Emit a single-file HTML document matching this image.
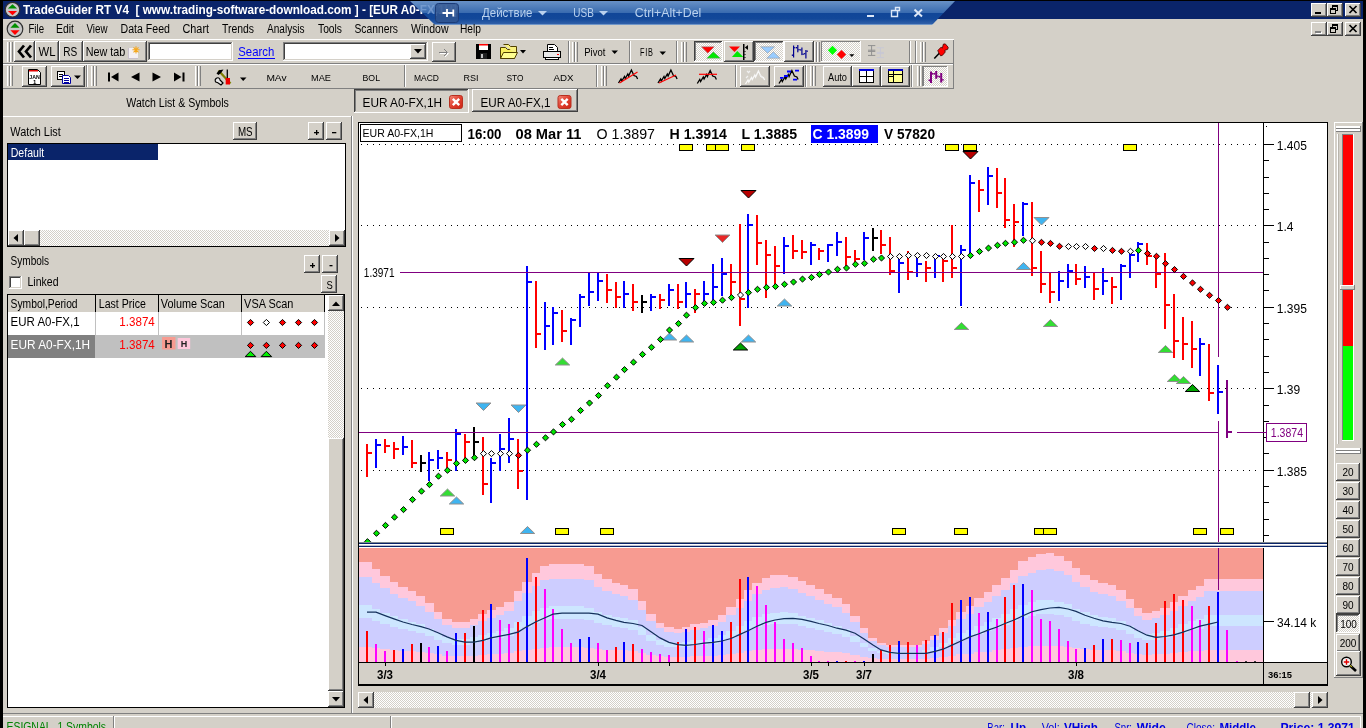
<!DOCTYPE html>
<html><head><meta charset="utf-8"><title>TradeGuider RT V4</title>
<style>html,body{margin:0;padding:0;background:#D4D0C8;overflow:hidden;font-family:"Liberation Sans",sans-serif}
svg text{font-family:"Liberation Sans",sans-serif}</style></head>
<body>
<svg width="1366" height="728" viewBox="0 0 1366 728" font-family="Liberation Sans, sans-serif" style="display:block;will-change:transform">
<defs>
<pattern id="dith" width="2" height="2" patternUnits="userSpaceOnUse"><rect width="2" height="2" fill="#FFFFFF"/><rect width="1" height="1" fill="#D4D0C8"/><rect x="1" y="1" width="1" height="1" fill="#D4D0C8"/></pattern>
<linearGradient id="ovl" x1="0" y1="0" x2="0" y2="1">
<stop offset="0" stop-color="#6C94C8"/><stop offset="0.5" stop-color="#3A6CB0"/><stop offset="0.53" stop-color="#104698"/><stop offset="0.75" stop-color="#124899"/><stop offset="0.94" stop-color="#2E5EA8"/><stop offset="0.97" stop-color="#7096C8"/><stop offset="1" stop-color="#7096C8"/>
</linearGradient>
<linearGradient id="cig" x1="0" y1="0" x2="1" y2="1"><stop offset="0" stop-color="#F48878"/><stop offset="0.5" stop-color="#E04030"/><stop offset="1" stop-color="#CC2414"/></linearGradient>
<linearGradient id="ovlfade" x1="0" y1="0" x2="1" y2="0">
<stop offset="0" stop-color="#0A246A" stop-opacity="0.55"/><stop offset="1" stop-color="#0A246A" stop-opacity="0"/>
</linearGradient>
</defs>
<rect x="0" y="0" width="1366" height="728" fill="#D4D0C8" />
<rect x="3" y="1" width="1360" height="18" fill="#0A246A" />
<circle cx="12.5" cy="9.7" r="7.3" fill="#C8C8C8" stroke="#303030" stroke-width="1.2"/>
<polygon points="12.50,4.20 7.90,8.50 17.10,8.50" fill="#009000" />
<polygon points="12.50,15.20 7.90,10.90 17.10,10.90" fill="#FF0000" />
<text x="23" y="14" font-size="12" fill="#FFF" font-weight="bold" text-anchor="start" textLength="434" lengthAdjust="spacingAndGlyphs" xml:space="preserve">TradeGuider RT V4  [ www.trading-software-download.com ] - [EUR A0-FX,1H]</text>
<polygon points="409.00,0.00 956.00,0.00 932.00,25.00 435.00,25.00" fill="url(#ovl)" />
<clipPath id="cpo"><polygon points="409,0 470,0 470,25 435,25"/></clipPath>
<text x="23" y="14" font-size="12" fill="#7FA3D6" font-weight="bold" text-anchor="start" textLength="434" lengthAdjust="spacingAndGlyphs" xml:space="preserve" clip-path="url(#cpo)" opacity="0.75">TradeGuider RT V4  [ www.trading-software-download.com ] - [EUR A0-FX,1H]</text>
<rect x="435.5" y="3.5" width="23" height="19" rx="3" ry="3" fill="#33568F" fill-opacity="0.75" stroke="#1C3C78" stroke-width="1"/>
<path d="M442.5 13 H447 M447 9 V17 M447 13 H453 M453.3 9.5 V16.5" stroke="#FFFFFF" stroke-width="1.8" fill="none"/>
<text x="482" y="17" font-size="13" fill="#B9D1EE" font-weight="normal" text-anchor="start" textLength="50.5" lengthAdjust="spacingAndGlyphs" >Действие</text>
<polygon points="538.00,11.00 547.00,11.00 542.50,15.50" fill="#B9D1EE" />
<text x="573.3" y="17" font-size="13" fill="#B9D1EE" font-weight="normal" text-anchor="start" textLength="20.5" lengthAdjust="spacingAndGlyphs" >USB</text>
<polygon points="599.00,11.00 608.00,11.00 603.50,15.50" fill="#B9D1EE" />
<text x="634.8" y="17" font-size="13" fill="#B9D1EE" font-weight="normal" text-anchor="start" textLength="66.5" lengthAdjust="spacingAndGlyphs" >Ctrl+Alt+Del</text>
<rect x="867" y="15" width="7" height="2" fill="#DDE8F8" />
<path d="M893.5 10.5 h6 v-3 h-4 v3 M891.5 10.5 h6 v6 h-6 z" stroke="#DDE8F8" stroke-width="1.4" fill="none"/>
<path d="M914.5 9.5 L922 16.5 M922 9.5 L914.5 16.5" stroke="#DDE8F8" stroke-width="2" fill="none"/>
<rect x="1311" y="3" width="16" height="14" fill="#D4D0C8" />
<rect x="1311" y="3" width="15" height="1" fill="#FFFFFF" />
<rect x="1311" y="3" width="1" height="13" fill="#FFFFFF" />
<rect x="1311" y="16" width="16" height="1" fill="#404040" />
<rect x="1326" y="3" width="1" height="14" fill="#404040" />
<rect x="1312" y="15" width="14" height="1" fill="#808080" />
<rect x="1325" y="4" width="1" height="12" fill="#808080" />
<rect x="1315" y="12" width="6" height="2" fill="#000" />
<rect x="1327" y="3" width="16" height="14" fill="#D4D0C8" />
<rect x="1327" y="3" width="15" height="1" fill="#FFFFFF" />
<rect x="1327" y="3" width="1" height="13" fill="#FFFFFF" />
<rect x="1327" y="16" width="16" height="1" fill="#404040" />
<rect x="1342" y="3" width="1" height="14" fill="#404040" />
<rect x="1328" y="15" width="14" height="1" fill="#808080" />
<rect x="1341" y="4" width="1" height="12" fill="#808080" />
<rect x="1332" y="5" width="6" height="2" fill="#000" />
<rect x="1332" y="5" width="1" height="4" fill="#000" />
<rect x="1337" y="5" width="1" height="6" fill="#000" />
<rect x="1336" y="10" width="2" height="1" fill="#000" />
<rect x="1330" y="8" width="6" height="2" fill="#000" />
<rect x="1330" y="8" width="1" height="6" fill="#000" />
<rect x="1335" y="8" width="1" height="6" fill="#000" />
<rect x="1330" y="13" width="6" height="1" fill="#000" />
<rect x="1345" y="3" width="16" height="14" fill="#D4D0C8" />
<rect x="1345" y="3" width="15" height="1" fill="#FFFFFF" />
<rect x="1345" y="3" width="1" height="13" fill="#FFFFFF" />
<rect x="1345" y="16" width="16" height="1" fill="#404040" />
<rect x="1360" y="3" width="1" height="14" fill="#404040" />
<rect x="1346" y="15" width="14" height="1" fill="#808080" />
<rect x="1359" y="4" width="1" height="12" fill="#808080" />
<path d="M1349.5 6 L1356.5 13 M1356.5 6 L1349.5 13" stroke="#000" stroke-width="1.7" fill="none"/>
<rect x="1311" y="22" width="16" height="14" fill="#D4D0C8" />
<rect x="1311" y="22" width="15" height="1" fill="#FFFFFF" />
<rect x="1311" y="22" width="1" height="13" fill="#FFFFFF" />
<rect x="1311" y="35" width="16" height="1" fill="#404040" />
<rect x="1326" y="22" width="1" height="14" fill="#404040" />
<rect x="1312" y="34" width="14" height="1" fill="#808080" />
<rect x="1325" y="23" width="1" height="12" fill="#808080" />
<rect x="1315" y="31" width="6" height="2" fill="#808080" />
<rect x="1316" y="32" width="6" height="2" fill="#FFFFFF" />
<rect x="1315" y="31" width="6" height="2" fill="#808080" />
<rect x="1327" y="22" width="16" height="14" fill="#D4D0C8" />
<rect x="1327" y="22" width="15" height="1" fill="#FFFFFF" />
<rect x="1327" y="22" width="1" height="13" fill="#FFFFFF" />
<rect x="1327" y="35" width="16" height="1" fill="#404040" />
<rect x="1342" y="22" width="1" height="14" fill="#404040" />
<rect x="1328" y="34" width="14" height="1" fill="#808080" />
<rect x="1341" y="23" width="1" height="12" fill="#808080" />
<rect x="1332" y="24" width="6" height="2" fill="#000" />
<rect x="1332" y="24" width="1" height="4" fill="#000" />
<rect x="1337" y="24" width="1" height="6" fill="#000" />
<rect x="1336" y="29" width="2" height="1" fill="#000" />
<rect x="1330" y="27" width="6" height="2" fill="#000" />
<rect x="1330" y="27" width="1" height="6" fill="#000" />
<rect x="1335" y="27" width="1" height="6" fill="#000" />
<rect x="1330" y="32" width="6" height="1" fill="#000" />
<rect x="1345" y="22" width="16" height="14" fill="#D4D0C8" />
<rect x="1345" y="22" width="15" height="1" fill="#FFFFFF" />
<rect x="1345" y="22" width="1" height="13" fill="#FFFFFF" />
<rect x="1345" y="35" width="16" height="1" fill="#404040" />
<rect x="1360" y="22" width="1" height="14" fill="#404040" />
<rect x="1346" y="34" width="14" height="1" fill="#808080" />
<rect x="1359" y="23" width="1" height="12" fill="#808080" />
<path d="M1349.5 25 L1356.5 32 M1356.5 25 L1349.5 32" stroke="#000" stroke-width="1.7" fill="none"/>
<circle cx="15" cy="29" r="7.8" fill="#C8C8C8" stroke="#303030" stroke-width="1.2"/>
<polygon points="15.00,23.00 10.40,27.80 19.60,27.80" fill="#009000" />
<polygon points="15.00,35.00 10.40,30.20 19.60,30.20" fill="#FF0000" />
<text x="28.5" y="33" font-size="12" fill="#000" font-weight="normal" text-anchor="start" textLength="15.5" lengthAdjust="spacingAndGlyphs" >File</text>
<text x="56" y="33" font-size="12" fill="#000" font-weight="normal" text-anchor="start" textLength="18" lengthAdjust="spacingAndGlyphs" >Edit</text>
<text x="86.5" y="33" font-size="12" fill="#000" font-weight="normal" text-anchor="start" textLength="21.0" lengthAdjust="spacingAndGlyphs" >View</text>
<text x="120.5" y="33" font-size="12" fill="#000" font-weight="normal" text-anchor="start" textLength="49.5" lengthAdjust="spacingAndGlyphs" >Data Feed</text>
<text x="182.5" y="33" font-size="12" fill="#000" font-weight="normal" text-anchor="start" textLength="26.5" lengthAdjust="spacingAndGlyphs" >Chart</text>
<text x="222" y="33" font-size="12" fill="#000" font-weight="normal" text-anchor="start" textLength="32" lengthAdjust="spacingAndGlyphs" >Trends</text>
<text x="267" y="33" font-size="12" fill="#000" font-weight="normal" text-anchor="start" textLength="37.5" lengthAdjust="spacingAndGlyphs" >Analysis</text>
<text x="318" y="33" font-size="12" fill="#000" font-weight="normal" text-anchor="start" textLength="24" lengthAdjust="spacingAndGlyphs" >Tools</text>
<text x="354.5" y="33" font-size="12" fill="#000" font-weight="normal" text-anchor="start" textLength="43.5" lengthAdjust="spacingAndGlyphs" >Scanners</text>
<text x="411" y="33" font-size="12" fill="#000" font-weight="normal" text-anchor="start" textLength="37.5" lengthAdjust="spacingAndGlyphs" >Window</text>
<text x="460" y="33" font-size="12" fill="#000" font-weight="normal" text-anchor="start" textLength="21" lengthAdjust="spacingAndGlyphs" >Help</text>
<rect x="3" y="39" width="951" height="1" fill="#FFFFFF" />
<rect x="3" y="63" width="951" height="1" fill="#808080" />
<rect x="3" y="64" width="951" height="1" fill="#FFFFFF" />
<rect x="3" y="88" width="951" height="1" fill="#808080" />
<rect x="953" y="40" width="1" height="49" fill="#808080" />
<rect x="7" y="42" width="1" height="20" fill="#FFFFFF" />
<rect x="8" y="42" width="1" height="20" fill="#D4D0C8" />
<rect x="9" y="42" width="1" height="20" fill="#808080" />
<rect x="10" y="42" width="1" height="20" fill="#FFFFFF" />
<rect x="11" y="42" width="1" height="20" fill="#D4D0C8" />
<rect x="12" y="42" width="1" height="20" fill="#808080" />
<rect x="14" y="41" width="21" height="21" fill="#D4D0C8" />
<rect x="14" y="41" width="20" height="1" fill="#FFFFFF" />
<rect x="14" y="41" width="1" height="20" fill="#FFFFFF" />
<rect x="14" y="61" width="21" height="1" fill="#404040" />
<rect x="34" y="41" width="1" height="21" fill="#404040" />
<rect x="15" y="60" width="19" height="1" fill="#808080" />
<rect x="33" y="42" width="1" height="19" fill="#808080" />
<rect x="35" y="41" width="24" height="21" fill="#D4D0C8" />
<rect x="35" y="41" width="23" height="1" fill="#FFFFFF" />
<rect x="35" y="41" width="1" height="20" fill="#FFFFFF" />
<rect x="35" y="61" width="24" height="1" fill="#404040" />
<rect x="58" y="41" width="1" height="21" fill="#404040" />
<rect x="36" y="60" width="22" height="1" fill="#808080" />
<rect x="57" y="42" width="1" height="19" fill="#808080" />
<rect x="59" y="41" width="24" height="21" fill="#D4D0C8" />
<rect x="59" y="41" width="23" height="1" fill="#FFFFFF" />
<rect x="59" y="41" width="1" height="20" fill="#FFFFFF" />
<rect x="59" y="61" width="24" height="1" fill="#404040" />
<rect x="82" y="41" width="1" height="21" fill="#404040" />
<rect x="60" y="60" width="22" height="1" fill="#808080" />
<rect x="81" y="42" width="1" height="19" fill="#808080" />
<rect x="83" y="41" width="64" height="21" fill="#D4D0C8" />
<rect x="83" y="41" width="63" height="1" fill="#FFFFFF" />
<rect x="83" y="41" width="1" height="20" fill="#FFFFFF" />
<rect x="83" y="61" width="64" height="1" fill="#404040" />
<rect x="146" y="41" width="1" height="21" fill="#404040" />
<rect x="84" y="60" width="62" height="1" fill="#808080" />
<rect x="145" y="42" width="1" height="19" fill="#808080" />
<path d="M24 45.5 L19 51.5 L24 57.5 M31 45.5 L26 51.5 L31 57.5" stroke="#000" stroke-width="2.7" fill="none"/>
<text x="38.5" y="56" font-size="13" fill="#000" font-weight="normal" text-anchor="start" textLength="17" lengthAdjust="spacingAndGlyphs" >WL</text>
<text x="63.2" y="56" font-size="13" fill="#000" font-weight="normal" text-anchor="start" textLength="14" lengthAdjust="spacingAndGlyphs" >RS</text>
<text x="85.7" y="56" font-size="13" fill="#000" font-weight="normal" text-anchor="start" textLength="39.5" lengthAdjust="spacingAndGlyphs" >New tab</text>
<rect x="128" y="48" width="10" height="11" fill="#F4F0F4" />
<rect x="128" y="48" width="1" height="11" fill="#C8C0CC" />
<rect x="128" y="58" width="10" height="1" fill="#C8C0CC" />
<path d="M136 46.2 V53.4 M132.4 49.8 H139.6 M133.5 47.3 L138.5 52.3 M138.5 47.3 L133.5 52.3" stroke="#F4A820" stroke-width="1.1" fill="none"/>
<rect x="148" y="42" width="85" height="19" fill="#FFFFFF" />
<rect x="148" y="42" width="84" height="1" fill="#808080" />
<rect x="148" y="42" width="1" height="18" fill="#808080" />
<rect x="149" y="43" width="82" height="1" fill="#404040" />
<rect x="149" y="43" width="1" height="16" fill="#404040" />
<rect x="148" y="60" width="85" height="1" fill="#FFFFFF" />
<rect x="232" y="42" width="1" height="19" fill="#FFFFFF" />
<rect x="149" y="59" width="83" height="1" fill="#D4D0C8" />
<rect x="231" y="43" width="1" height="17" fill="#D4D0C8" />
<text x="238.3" y="56" font-size="13" fill="#0000FF" font-weight="normal" text-anchor="start" textLength="36" lengthAdjust="spacingAndGlyphs" >Search</text>
<rect x="238" y="58" width="37" height="1" fill="#0000FF" />
<rect x="283" y="42" width="145" height="19" fill="#FFFFFF" />
<rect x="283" y="42" width="144" height="1" fill="#808080" />
<rect x="283" y="42" width="1" height="18" fill="#808080" />
<rect x="284" y="43" width="142" height="1" fill="#404040" />
<rect x="284" y="43" width="1" height="16" fill="#404040" />
<rect x="283" y="60" width="145" height="1" fill="#FFFFFF" />
<rect x="427" y="42" width="1" height="19" fill="#FFFFFF" />
<rect x="284" y="59" width="143" height="1" fill="#D4D0C8" />
<rect x="426" y="43" width="1" height="17" fill="#D4D0C8" />
<rect x="410" y="44" width="16" height="15" fill="#D4D0C8" />
<rect x="410" y="44" width="15" height="1" fill="#FFFFFF" />
<rect x="410" y="44" width="1" height="14" fill="#FFFFFF" />
<rect x="410" y="58" width="16" height="1" fill="#404040" />
<rect x="425" y="44" width="1" height="15" fill="#404040" />
<rect x="411" y="57" width="14" height="1" fill="#808080" />
<rect x="424" y="45" width="1" height="13" fill="#808080" />
<polygon points="414.00,49.00 422.00,49.00 418.00,53.50" fill="#000" />
<rect x="432" y="42" width="24" height="20" fill="#D4D0C8" />
<rect x="432" y="42" width="23" height="1" fill="#FFFFFF" />
<rect x="432" y="42" width="1" height="19" fill="#FFFFFF" />
<rect x="432" y="61" width="24" height="1" fill="#404040" />
<rect x="455" y="42" width="1" height="20" fill="#404040" />
<rect x="433" y="60" width="22" height="1" fill="#808080" />
<rect x="454" y="43" width="1" height="18" fill="#808080" />
<path d="M439 52.5 H447 M444 49 L447.5 52.5 L444 56" stroke="#FFFFFF" stroke-width="1" fill="none" transform="translate(1,1)"/>
<path d="M439 52.5 H447 M444 49 L447.5 52.5 L444 56" stroke="#808080" stroke-width="1" fill="none"/>
<rect x="476" y="44" width="15" height="15" fill="#000" />
<rect x="479" y="44" width="9" height="6" fill="#FFFFFF" />
<rect x="479" y="44" width="9" height="1.5" fill="#FF0000" />
<rect x="480" y="53" width="7" height="6" fill="#202020" />
<rect x="481" y="54" width="2" height="4" fill="#C0C0C0" />
<path d="M500.5 47.5 h5 l2 2 h7 v9 h-14 z" fill="#F8F060" stroke="#504000" stroke-width="1"/>
<path d="M503.5 44.5 h5 l2 2 h6 v8" fill="#F8F080" stroke="#504000" stroke-width="1"/>
<path d="M500.5 58.5 l3 -6 h14 l-3 6 z" fill="#FFFF90" stroke="#504000" stroke-width="1"/>
<polygon points="520.00,50.00 526.00,50.00 523.00,53.50" fill="#000" />
<path d="M547.5 51.5 v-7 h7 l3 3 v4" fill="#FFF" stroke="#000" stroke-width="1"/>
<rect x="543.5" y="51.5" width="17" height="6" fill="#E8E8E8" stroke="#000" stroke-width="1"/>
<rect x="545.5" y="57.5" width="13" height="2" fill="#FFF" stroke="#000" stroke-width="1"/>
<rect x="549" y="47" width="4" height="1" fill="#000" />
<rect x="549" y="49" width="5" height="1" fill="#000" />
<rect x="557" y="54" width="2" height="1" fill="#FF0000" />
<rect x="568" y="41" width="1" height="22" fill="#808080" />
<rect x="569" y="41" width="1" height="22" fill="#FFFFFF" />
<rect x="572" y="42" width="1" height="20" fill="#FFFFFF" />
<rect x="573" y="42" width="1" height="20" fill="#D4D0C8" />
<rect x="574" y="42" width="1" height="20" fill="#808080" />
<rect x="575" y="42" width="1" height="20" fill="#FFFFFF" />
<rect x="576" y="42" width="1" height="20" fill="#D4D0C8" />
<rect x="577" y="42" width="1" height="20" fill="#808080" />
<text x="584.3" y="55.5" font-size="10.5" fill="#000" font-weight="normal" text-anchor="start" textLength="21" lengthAdjust="spacingAndGlyphs" >Pivot</text>
<polygon points="611.50,50.50 618.00,50.50 614.70,54.00" fill="#000" />
<rect x="629" y="41" width="1" height="22" fill="#808080" />
<rect x="630" y="41" width="1" height="22" fill="#FFFFFF" />
<text x="640" y="55.5" font-size="10.5" fill="#000" font-weight="normal" text-anchor="start" textLength="13.5" lengthAdjust="spacingAndGlyphs" letter-spacing="1">FIB</text>
<polygon points="659.50,51.50 666.00,51.50 662.70,55.00" fill="#000" />
<rect x="676" y="41" width="1" height="22" fill="#808080" />
<rect x="677" y="41" width="1" height="22" fill="#FFFFFF" />
<rect x="681" y="42" width="1" height="20" fill="#FFFFFF" />
<rect x="682" y="42" width="1" height="20" fill="#D4D0C8" />
<rect x="683" y="42" width="1" height="20" fill="#808080" />
<rect x="684" y="42" width="1" height="20" fill="#FFFFFF" />
<rect x="685" y="42" width="1" height="20" fill="#D4D0C8" />
<rect x="686" y="42" width="1" height="20" fill="#808080" />
<rect x="694" y="41" width="29" height="21" fill="url(#dith)" />
<rect x="694" y="41" width="28" height="1" fill="#404040" />
<rect x="694" y="41" width="1" height="20" fill="#404040" />
<rect x="695" y="42" width="26" height="1" fill="#808080" />
<rect x="695" y="42" width="1" height="18" fill="#808080" />
<rect x="694" y="61" width="29" height="1" fill="#FFFFFF" />
<rect x="722" y="41" width="1" height="21" fill="#FFFFFF" />
<polygon points="701.40,46.80 714.30,46.80 707.80,53.20" fill="#FF0000" stroke="#909090" stroke-width="0.5" />
<polygon points="713.30,51.80 706.70,58.20 720.50,58.20" fill="#00E800" stroke="#909090" stroke-width="0.5" />
<rect x="724" y="41" width="30" height="21" fill="#D4D0C8" />
<rect x="724" y="41" width="29" height="1" fill="#FFFFFF" />
<rect x="724" y="41" width="1" height="20" fill="#FFFFFF" />
<rect x="724" y="61" width="30" height="1" fill="#404040" />
<rect x="753" y="41" width="1" height="21" fill="#404040" />
<rect x="725" y="60" width="28" height="1" fill="#808080" />
<rect x="752" y="42" width="1" height="19" fill="#808080" />
<polygon points="729.00,46.40 740.00,46.40 734.50,52.10" fill="#FF0000" />
<polygon points="737.30,50.90 731.90,56.90 743.30,56.90" fill="#00E800" />
<rect x="743" y="44" width="1.5" height="16" fill="#000" />
<polygon points="744.80,47.50 748.00,45.00 748.00,50.00" fill="#000" />
<rect x="744.5" y="51" width="1" height="1" fill="#000" />
<rect x="744.5" y="54" width="1" height="1" fill="#000" />
<rect x="744.5" y="57" width="1" height="1" fill="#000" />
<rect x="754" y="41" width="30" height="21" fill="url(#dith)" />
<rect x="754" y="41" width="29" height="1" fill="#404040" />
<rect x="754" y="41" width="1" height="20" fill="#404040" />
<rect x="755" y="42" width="27" height="1" fill="#808080" />
<rect x="755" y="42" width="1" height="18" fill="#808080" />
<rect x="754" y="61" width="30" height="1" fill="#FFFFFF" />
<rect x="783" y="41" width="1" height="21" fill="#FFFFFF" />
<polygon points="760.50,46.80 774.60,46.80 767.60,53.20" fill="#99CCFF" stroke="#909090" stroke-width="0.5" />
<polygon points="773.30,51.80 766.70,58.20 780.00,58.20" fill="#99CCFF" stroke="#909090" stroke-width="0.5" />
<rect x="784" y="41" width="30" height="21" fill="#D4D0C8" />
<rect x="784" y="41" width="29" height="1" fill="#FFFFFF" />
<rect x="784" y="41" width="1" height="20" fill="#FFFFFF" />
<rect x="784" y="61" width="30" height="1" fill="#404040" />
<rect x="813" y="41" width="1" height="21" fill="#404040" />
<rect x="785" y="60" width="28" height="1" fill="#808080" />
<rect x="812" y="42" width="1" height="19" fill="#808080" />
<rect x="793" y="45.5" width="1.2" height="12" fill="#000090" />
<rect x="791.8" y="54.5" width="1.2" height="1.4" fill="#000090" />
<rect x="794.2" y="47" width="1.2" height="1.4" fill="#000090" />
<rect x="797.2" y="45" width="1.2" height="7.3" fill="#000090" />
<rect x="796" y="47" width="1.2" height="1.4" fill="#000090" />
<rect x="798.4" y="49" width="1.3" height="1.4" fill="#000090" />
<rect x="801.3" y="47.5" width="1.2" height="7.6" fill="#000090" />
<rect x="800.1" y="49.2" width="1.2" height="1.4" fill="#000090" />
<rect x="802.5" y="53.5" width="1.3" height="1.4" fill="#000090" />
<rect x="805.3" y="50" width="1.2" height="8.5" fill="#000090" />
<rect x="804.1" y="53" width="1.2" height="1.4" fill="#000090" />
<rect x="806.5" y="50.5" width="1.3" height="1.4" fill="#000090" />
<rect x="814" y="42" width="1" height="20" fill="#FFFFFF" />
<rect x="815" y="42" width="1" height="20" fill="#D4D0C8" />
<rect x="816" y="42" width="1" height="20" fill="#808080" />
<rect x="817" y="42" width="1" height="20" fill="#FFFFFF" />
<rect x="818" y="42" width="1" height="20" fill="#D4D0C8" />
<rect x="819" y="42" width="1" height="20" fill="#808080" />
<rect x="821" y="41" width="40" height="21" fill="url(#dith)" />
<rect x="821" y="41" width="39" height="1" fill="#808080" />
<rect x="821" y="41" width="1" height="20" fill="#808080" />
<rect x="821" y="61" width="40" height="1" fill="#FFFFFF" />
<rect x="860" y="41" width="1" height="21" fill="#FFFFFF" />
<polygon points="827.90,50.30 832.50,45.70 837.10,50.30 832.50,54.90" fill="#00FF00" />
<polygon points="836.90,54.50 841.50,49.90 846.10,54.50 841.50,59.10" fill="#FF0000" />
<polygon points="849.30,54.30 854.30,54.30 851.80,57.00" fill="#000" />
<path d="M868 45.6 H875.3 M868 50.2 H875.3 M868 51.4 H875.3 M868 55.4 H875.3 M871.6 45.6 V55.4" stroke="#909090" stroke-width="1" fill="none"/>
<path d="M876.8 47.8 H884 M876.8 52.4 H884 M876.8 53.6 H884 M876.8 57.6 H884 M880.4 47.8 V57.6" stroke="#C8C8D4" stroke-width="1" fill="none"/>
<rect x="909" y="41" width="1" height="22" fill="#808080" />
<rect x="910" y="41" width="1" height="22" fill="#FFFFFF" />
<rect x="915" y="41" width="1" height="22" fill="#808080" />
<rect x="916" y="41" width="1" height="22" fill="#FFFFFF" />
<rect x="920" y="42" width="1" height="20" fill="#FFFFFF" />
<rect x="921" y="42" width="1" height="20" fill="#D4D0C8" />
<rect x="922" y="42" width="1" height="20" fill="#808080" />
<rect x="923" y="42" width="1" height="20" fill="#FFFFFF" />
<rect x="924" y="42" width="1" height="20" fill="#D4D0C8" />
<rect x="925" y="42" width="1" height="20" fill="#808080" />
<path d="M934.3 58.4 L939.5 53" stroke="#000" stroke-width="1.5"/>
<path d="M937.8 50.5 L941.2 47.1 L942.3 48.2 L943.4 44.1 L945.3 43.9 L948.2 47.3 L947.8 49.2 L944.6 50.5 L945.3 52 L942.3 55.4 L940.6 55.8 L938.7 52.8 Z" fill="#FF0000" stroke="#400000" stroke-width="0.8"/>
<rect x="7" y="66" width="1" height="20" fill="#FFFFFF" />
<rect x="8" y="66" width="1" height="20" fill="#D4D0C8" />
<rect x="9" y="66" width="1" height="20" fill="#808080" />
<rect x="10" y="66" width="1" height="20" fill="#FFFFFF" />
<rect x="11" y="66" width="1" height="20" fill="#D4D0C8" />
<rect x="12" y="66" width="1" height="20" fill="#808080" />
<rect x="22" y="66" width="25" height="21" fill="#D4D0C8" />
<rect x="22" y="66" width="24" height="1" fill="#FFFFFF" />
<rect x="22" y="66" width="1" height="20" fill="#FFFFFF" />
<rect x="22" y="86" width="25" height="1" fill="#404040" />
<rect x="46" y="66" width="1" height="21" fill="#404040" />
<rect x="23" y="85" width="23" height="1" fill="#808080" />
<rect x="45" y="67" width="1" height="19" fill="#808080" />
<rect x="51" y="66" width="34" height="21" fill="#D4D0C8" />
<rect x="51" y="66" width="33" height="1" fill="#FFFFFF" />
<rect x="51" y="66" width="1" height="20" fill="#FFFFFF" />
<rect x="51" y="86" width="34" height="1" fill="#404040" />
<rect x="84" y="66" width="1" height="21" fill="#404040" />
<rect x="52" y="85" width="32" height="1" fill="#808080" />
<rect x="83" y="67" width="1" height="19" fill="#808080" />
<rect x="86" y="65" width="1" height="22" fill="#808080" />
<rect x="87" y="65" width="1" height="22" fill="#FFFFFF" />
<path d="M28.5 69.5 h9 l3 3 v12 h-12 z" fill="#FFF" stroke="#000"/>
<rect x="29" y="70" width="9" height="1.5" fill="#E00000" />
<text x="29.3" y="78.5" font-size="6" fill="#000" font-weight="bold" text-anchor="start" textLength="10.5" lengthAdjust="spacingAndGlyphs" >JAN</text>
<text x="33" y="84" font-size="6" fill="#000" font-weight="bold" text-anchor="start" >1</text>
<rect x="57.5" y="71.5" width="7" height="8" fill="#FFF" stroke="#000"/>
<rect x="59" y="74" width="4" height="1" fill="#000" />
<rect x="59" y="76" width="4" height="1" fill="#000" />
<path d="M62.5 75.5 h6 l2 2 v6 h-8 z" fill="#FFF" stroke="#0000A0"/>
<rect x="64" y="78" width="5" height="1" fill="#0000A0" />
<rect x="64" y="80" width="5" height="1" fill="#0000A0" />
<rect x="64" y="82" width="5" height="1" fill="#0000A0" />
<polygon points="74.00,75.50 81.00,75.50 77.50,79.00" fill="#000" />
<rect x="91" y="66" width="1" height="20" fill="#FFFFFF" />
<rect x="92" y="66" width="1" height="20" fill="#D4D0C8" />
<rect x="93" y="66" width="1" height="20" fill="#808080" />
<rect x="94" y="66" width="1" height="20" fill="#FFFFFF" />
<rect x="95" y="66" width="1" height="20" fill="#D4D0C8" />
<rect x="96" y="66" width="1" height="20" fill="#808080" />
<rect x="108" y="72.5" width="2" height="9" fill="#000" />
<polygon points="118.50,72.50 118.50,81.50 111.00,77.00" fill="#000" />
<polygon points="139.50,72.50 139.50,81.50 131.00,77.00" fill="#000" />
<polygon points="152.50,72.50 152.50,81.50 161.00,77.00" fill="#000" />
<polygon points="174.00,72.50 174.00,81.50 181.50,77.00" fill="#000" />
<rect x="182.5" y="72.5" width="2" height="9" fill="#000" />
<rect x="195" y="66" width="1" height="20" fill="#FFFFFF" />
<rect x="196" y="66" width="1" height="20" fill="#D4D0C8" />
<rect x="197" y="66" width="1" height="20" fill="#808080" />
<rect x="198" y="66" width="1" height="20" fill="#FFFFFF" />
<rect x="199" y="66" width="1" height="20" fill="#D4D0C8" />
<rect x="200" y="66" width="1" height="20" fill="#808080" />
<path d="M218.5 70.5 L230.5 83.5" stroke="#808000" stroke-width="2.2"/>
<path d="M216.5 73.5 L219 70.2 L223.5 69.6 L221 73 L218.5 75 Z" fill="#000"/>
<path d="M227.3 69.5 V78" stroke="#000" stroke-width="1.3"/>
<rect x="225.7" y="78" width="4.3" height="6.5" fill="#F00000" />
<path d="M216 78.5 c-1.5 1.5 -1 4 1.5 4 l3.5 2.5 l2 -2 l-3 -3 c0 -2 -2 -3 -4 -1.5" stroke="#000" stroke-width="1.2" fill="#E8E8E8"/>
<polygon points="240.00,77.50 246.50,77.50 243.20,81.00" fill="#000" />
<text x="266.4" y="80.5" font-size="9.5" fill="#000" font-weight="normal" text-anchor="start" textLength="20.2" lengthAdjust="spacingAndGlyphs" >MAv</text>
<text x="311" y="80.5" font-size="9.5" fill="#000" font-weight="normal" text-anchor="start" textLength="20" lengthAdjust="spacingAndGlyphs" >MAE</text>
<text x="362.5" y="80.5" font-size="9.5" fill="#000" font-weight="normal" text-anchor="start" textLength="17.5" lengthAdjust="spacingAndGlyphs" >BOL</text>
<text x="414" y="80.5" font-size="9.5" fill="#000" font-weight="normal" text-anchor="start" textLength="25" lengthAdjust="spacingAndGlyphs" >MACD</text>
<text x="463.5" y="80.5" font-size="9.5" fill="#000" font-weight="normal" text-anchor="start" textLength="15.0" lengthAdjust="spacingAndGlyphs" >RSI</text>
<text x="506.5" y="80.5" font-size="9.5" fill="#000" font-weight="normal" text-anchor="start" textLength="17.0" lengthAdjust="spacingAndGlyphs" >STO</text>
<text x="553.5" y="80.5" font-size="9.5" fill="#000" font-weight="normal" text-anchor="start" textLength="20.0" lengthAdjust="spacingAndGlyphs" >ADX</text>
<rect x="404" y="65" width="1" height="22" fill="#808080" />
<rect x="405" y="65" width="1" height="22" fill="#FFFFFF" />
<rect x="596" y="65" width="1" height="22" fill="#808080" />
<rect x="597" y="65" width="1" height="22" fill="#FFFFFF" />
<rect x="601" y="66" width="1" height="20" fill="#FFFFFF" />
<rect x="602" y="66" width="1" height="20" fill="#D4D0C8" />
<rect x="603" y="66" width="1" height="20" fill="#808080" />
<rect x="604" y="66" width="1" height="20" fill="#FFFFFF" />
<rect x="605" y="66" width="1" height="20" fill="#D4D0C8" />
<rect x="606" y="66" width="1" height="20" fill="#808080" />
<path d="M618.5 83.0 l2.5 -4 l0.8 2 l2.7 -4.5 l0.8 2 l2.5 -4.5 l0.8 2 l2.8 -6 l2.5 5.5 l2.5 1 l1.2 2.5" stroke="#000" stroke-width="1.3" fill="none"/>
<path d="M619.5 83 L637.5 72" stroke="#FF0000" stroke-width="1.2"/>
<path d="M658 83.0 l2.5 -4 l0.8 2 l2.7 -4.5 l0.8 2 l2.5 -4.5 l0.8 2 l2.8 -6 l2.5 5.5 l2.5 1 l1.2 2.5" stroke="#000" stroke-width="1.3" fill="none"/>
<path d="M659 83 L676 75" stroke="#FF0000" stroke-width="1.2" fill="none"/>
<path d="M697.3 83.5 l2.5 -4 l0.8 2 l2.7 -4.5 l0.8 2 l2.5 -4.5 l0.8 2 l2.8 -6 l2.5 5.5 l2.5 1 l1.2 2.5" stroke="#000" stroke-width="1.3" fill="none"/>
<path d="M699 74.3 H717" stroke="#FF0000" stroke-width="1.2"/>
<rect x="735" y="65" width="1" height="22" fill="#808080" />
<rect x="736" y="65" width="1" height="22" fill="#FFFFFF" />
<rect x="740" y="66" width="30" height="21" fill="#D4D0C8" />
<rect x="740" y="66" width="29" height="1" fill="#FFFFFF" />
<rect x="740" y="66" width="1" height="20" fill="#FFFFFF" />
<rect x="740" y="86" width="30" height="1" fill="#404040" />
<rect x="769" y="66" width="1" height="21" fill="#404040" />
<rect x="741" y="85" width="28" height="1" fill="#808080" />
<rect x="768" y="67" width="1" height="19" fill="#808080" />
<path d="M745.5 84.0 l2.5 -4 l0.8 2 l2.7 -4.5 l0.8 2 l2.5 -4.5 l0.8 2 l2.8 -6 l2.5 5.5 l2.5 1 l1.2 2.5" stroke="#F8F8F8" stroke-width="1.3" fill="none"/>
<path d="M747 71 l2 2 M750 71 l-2 2 M746 78 l2 -2 M760 75 l3 3" stroke="#F0F0F0" stroke-width="1.2"/>
<rect x="774" y="66" width="30" height="21" fill="#D4D0C8" />
<rect x="774" y="66" width="29" height="1" fill="#FFFFFF" />
<rect x="774" y="66" width="1" height="20" fill="#FFFFFF" />
<rect x="774" y="86" width="30" height="1" fill="#404040" />
<rect x="803" y="66" width="1" height="21" fill="#404040" />
<rect x="775" y="85" width="28" height="1" fill="#808080" />
<rect x="802" y="67" width="1" height="19" fill="#808080" />
<path d="M779 83.5 l2.5 -4 l0.8 2 l2.7 -4.5 l0.8 2 l2.5 -4.5 l0.8 2 l2.8 -6 l2.5 5.5 l2.5 1 l1.2 2.5" stroke="#000" stroke-width="1.3" fill="none"/>
<path d="M780 77.8 h3.5 M784 76 h4 M787 71.5 h4 M795 70.7 h4 M793 79.7 h4" stroke="#0000FF" stroke-width="1.8"/>
<rect x="805" y="65" width="1" height="22" fill="#808080" />
<rect x="806" y="65" width="1" height="22" fill="#FFFFFF" />
<rect x="810" y="66" width="1" height="20" fill="#FFFFFF" />
<rect x="811" y="66" width="1" height="20" fill="#D4D0C8" />
<rect x="812" y="66" width="1" height="20" fill="#808080" />
<rect x="813" y="66" width="1" height="20" fill="#FFFFFF" />
<rect x="814" y="66" width="1" height="20" fill="#D4D0C8" />
<rect x="815" y="66" width="1" height="20" fill="#808080" />
<rect x="823" y="66" width="29" height="21" fill="#D4D0C8" />
<rect x="823" y="66" width="28" height="1" fill="#FFFFFF" />
<rect x="823" y="66" width="1" height="20" fill="#FFFFFF" />
<rect x="823" y="86" width="29" height="1" fill="#404040" />
<rect x="851" y="66" width="1" height="21" fill="#404040" />
<rect x="824" y="85" width="27" height="1" fill="#808080" />
<rect x="850" y="67" width="1" height="19" fill="#808080" />
<text x="828" y="81" font-size="10.5" fill="#000" font-weight="normal" text-anchor="start" textLength="19" lengthAdjust="spacingAndGlyphs" >Auto</text>
<rect x="852" y="66" width="29" height="21" fill="#D4D0C8" />
<rect x="852" y="66" width="28" height="1" fill="#FFFFFF" />
<rect x="852" y="66" width="1" height="20" fill="#FFFFFF" />
<rect x="852" y="86" width="29" height="1" fill="#404040" />
<rect x="880" y="66" width="1" height="21" fill="#404040" />
<rect x="853" y="85" width="27" height="1" fill="#808080" />
<rect x="879" y="67" width="1" height="19" fill="#808080" />
<rect x="859.5" y="69.5" width="14" height="13" fill="#FFF" stroke="#000"/>
<rect x="859" y="69" width="15" height="2" fill="#0000E0" />
<rect x="866" y="71" width="1" height="12" fill="#000" />
<rect x="860" y="76" width="14" height="1" fill="#000" />
<rect x="881" y="66" width="29" height="21" fill="#D4D0C8" />
<rect x="881" y="66" width="28" height="1" fill="#FFFFFF" />
<rect x="881" y="66" width="1" height="20" fill="#FFFFFF" />
<rect x="881" y="86" width="29" height="1" fill="#404040" />
<rect x="909" y="66" width="1" height="21" fill="#404040" />
<rect x="882" y="85" width="27" height="1" fill="#808080" />
<rect x="908" y="67" width="1" height="19" fill="#808080" />
<rect x="888.5" y="69.5" width="14" height="13" fill="#FFFF90" stroke="#000"/>
<rect x="888" y="69" width="15" height="2" fill="#0000C0" />
<rect x="893" y="71" width="1" height="12" fill="#000" />
<rect x="889" y="76" width="5" height="1" fill="#000" />
<rect x="889" y="74" width="14" height="1" fill="#000" />
<rect x="911" y="65" width="1" height="22" fill="#808080" />
<rect x="912" y="65" width="1" height="22" fill="#FFFFFF" />
<rect x="917" y="66" width="1" height="20" fill="#FFFFFF" />
<rect x="918" y="66" width="1" height="20" fill="#D4D0C8" />
<rect x="919" y="66" width="1" height="20" fill="#808080" />
<rect x="920" y="66" width="1" height="20" fill="#FFFFFF" />
<rect x="921" y="66" width="1" height="20" fill="#D4D0C8" />
<rect x="922" y="66" width="1" height="20" fill="#808080" />
<rect x="923" y="66" width="25" height="21" fill="url(#dith)" />
<rect x="923" y="66" width="24" height="1" fill="#808080" />
<rect x="923" y="66" width="1" height="20" fill="#808080" />
<rect x="923" y="86" width="25" height="1" fill="#FFFFFF" />
<rect x="947" y="66" width="1" height="21" fill="#FFFFFF" />
<rect x="930" y="71.5" width="2" height="11.5" fill="#800080" />
<rect x="928.5" y="79.5" width="1.5" height="1.6" fill="#800080" />
<rect x="932" y="73" width="1.5" height="1.6" fill="#800080" />
<rect x="935.2" y="71" width="2" height="7.8" fill="#800080" />
<rect x="933.7" y="73" width="1.5" height="1.6" fill="#800080" />
<rect x="937.2" y="75.5" width="1.5" height="1.6" fill="#800080" />
<rect x="940.2" y="73" width="2" height="9.5" fill="#800080" />
<rect x="938.7" y="76" width="1.5" height="1.6" fill="#800080" />
<rect x="942.2" y="79" width="1.5" height="1.6" fill="#800080" />
<text x="126.3" y="107" font-size="12" fill="#000" font-weight="normal" text-anchor="start" textLength="102.5" lengthAdjust="spacingAndGlyphs" >Watch List &amp; Symbols</text>
<rect x="354" y="89" width="115" height="24" fill="#D4D0C8" />
<rect x="354" y="89" width="114" height="1" fill="#404040" />
<rect x="354" y="89" width="1" height="23" fill="#404040" />
<rect x="355" y="90" width="112" height="1" fill="#808080" />
<rect x="355" y="90" width="1" height="21" fill="#808080" />
<rect x="354" y="112" width="115" height="1" fill="#FFFFFF" />
<rect x="468" y="89" width="1" height="24" fill="#FFFFFF" />
<text x="362.5" y="106.5" font-size="13" fill="#000" font-weight="normal" text-anchor="start" textLength="79.5" lengthAdjust="spacingAndGlyphs" >EUR A0-FX,1H</text>
<rect x="449.5" y="95.5" width="13" height="13" rx="2.2" ry="2.2" fill="url(#cig)" stroke="#B83020" stroke-width="1"/>
<path d="M452.8 98.8 L459.2 105.2 M459.2 98.8 L452.8 105.2" stroke="#FFF" stroke-width="2.4" fill="none"/>
<rect x="472" y="89" width="106" height="23" fill="#D4D0C8" />
<rect x="472" y="89" width="105" height="1" fill="#FFFFFF" />
<rect x="472" y="89" width="1" height="22" fill="#FFFFFF" />
<rect x="472" y="111" width="106" height="1" fill="#404040" />
<rect x="577" y="89" width="1" height="23" fill="#404040" />
<rect x="473" y="110" width="104" height="1" fill="#808080" />
<rect x="576" y="90" width="1" height="21" fill="#808080" />
<text x="480.5" y="106.5" font-size="13" fill="#000" font-weight="normal" text-anchor="start" textLength="70" lengthAdjust="spacingAndGlyphs" >EUR A0-FX,1</text>
<rect x="558" y="95.5" width="13" height="13" rx="2.2" ry="2.2" fill="url(#cig)" stroke="#B83020" stroke-width="1"/>
<path d="M561.3 98.8 L567.7 105.2 M567.7 98.8 L561.3 105.2" stroke="#FFF" stroke-width="2.4" fill="none"/>
<rect x="3" y="116" width="348" height="1" fill="#FFFFFF" />
<rect x="351" y="116" width="1" height="598" fill="#808080" />
<rect x="352" y="116" width="1" height="598" fill="#FFFFFF" />
<text x="10.3" y="136" font-size="12" fill="#000" font-weight="normal" text-anchor="start" textLength="50.5" lengthAdjust="spacingAndGlyphs" >Watch List</text>
<rect x="233" y="122" width="24" height="18" fill="#D4D0C8" />
<rect x="233" y="122" width="23" height="1" fill="#FFFFFF" />
<rect x="233" y="122" width="1" height="17" fill="#FFFFFF" />
<rect x="233" y="139" width="24" height="1" fill="#404040" />
<rect x="256" y="122" width="1" height="18" fill="#404040" />
<rect x="234" y="138" width="22" height="1" fill="#808080" />
<rect x="255" y="123" width="1" height="16" fill="#808080" />
<text x="237.9" y="136" font-size="12" fill="#000" font-weight="normal" text-anchor="start" textLength="14.7" lengthAdjust="spacingAndGlyphs" >MS</text>
<rect x="308" y="122" width="16" height="18" fill="#D4D0C8" />
<rect x="308" y="122" width="15" height="1" fill="#FFFFFF" />
<rect x="308" y="122" width="1" height="17" fill="#FFFFFF" />
<rect x="308" y="139" width="16" height="1" fill="#404040" />
<rect x="323" y="122" width="1" height="18" fill="#404040" />
<rect x="309" y="138" width="14" height="1" fill="#808080" />
<rect x="322" y="123" width="1" height="16" fill="#808080" />
<rect x="314" y="132" width="5" height="1.3" fill="#000" />
<rect x="316" y="130" width="1.3" height="5" fill="#000" />
<rect x="326" y="122" width="16" height="18" fill="#D4D0C8" />
<rect x="326" y="122" width="15" height="1" fill="#FFFFFF" />
<rect x="326" y="122" width="1" height="17" fill="#FFFFFF" />
<rect x="326" y="139" width="16" height="1" fill="#404040" />
<rect x="341" y="122" width="1" height="18" fill="#404040" />
<rect x="327" y="138" width="14" height="1" fill="#808080" />
<rect x="340" y="123" width="1" height="16" fill="#808080" />
<rect x="332" y="132" width="4.3" height="1.3" fill="#000" />
<rect x="7" y="143" width="339" height="104" fill="#000" />
<rect x="8" y="144" width="337" height="102" fill="#FFFFFF" />
<rect x="8" y="144" width="150" height="16" fill="#0A246A" />
<text x="10.7" y="157" font-size="12" fill="#FFF" font-weight="normal" text-anchor="start" textLength="33.5" lengthAdjust="spacingAndGlyphs" >Default</text>
<rect x="8" y="230" width="337" height="16" fill="url(#dith)" />
<rect x="8" y="230" width="16" height="16" fill="#D4D0C8" />
<rect x="8" y="230" width="15" height="1" fill="#FFFFFF" />
<rect x="8" y="230" width="1" height="15" fill="#FFFFFF" />
<rect x="8" y="245" width="16" height="1" fill="#404040" />
<rect x="23" y="230" width="1" height="16" fill="#404040" />
<rect x="9" y="244" width="14" height="1" fill="#808080" />
<rect x="22" y="231" width="1" height="14" fill="#808080" />
<polygon points="18.00,234.00 18.00,242.00 13.50,238.00" fill="#000" />
<rect x="24" y="230" width="16" height="16" fill="#D4D0C8" />
<rect x="24" y="230" width="15" height="1" fill="#FFFFFF" />
<rect x="24" y="230" width="1" height="15" fill="#FFFFFF" />
<rect x="24" y="245" width="16" height="1" fill="#404040" />
<rect x="39" y="230" width="1" height="16" fill="#404040" />
<rect x="25" y="244" width="14" height="1" fill="#808080" />
<rect x="38" y="231" width="1" height="14" fill="#808080" />
<rect x="329" y="230" width="16" height="16" fill="#D4D0C8" />
<rect x="329" y="230" width="15" height="1" fill="#FFFFFF" />
<rect x="329" y="230" width="1" height="15" fill="#FFFFFF" />
<rect x="329" y="245" width="16" height="1" fill="#404040" />
<rect x="344" y="230" width="1" height="16" fill="#404040" />
<rect x="330" y="244" width="14" height="1" fill="#808080" />
<rect x="343" y="231" width="1" height="14" fill="#808080" />
<polygon points="335.00,234.00 335.00,242.00 339.50,238.00" fill="#000" />
<text x="10.6" y="264.5" font-size="12" fill="#000" font-weight="normal" text-anchor="start" textLength="38.5" lengthAdjust="spacingAndGlyphs" >Symbols</text>
<rect x="304" y="255" width="16" height="18" fill="#D4D0C8" />
<rect x="304" y="255" width="15" height="1" fill="#FFFFFF" />
<rect x="304" y="255" width="1" height="17" fill="#FFFFFF" />
<rect x="304" y="272" width="16" height="1" fill="#404040" />
<rect x="319" y="255" width="1" height="18" fill="#404040" />
<rect x="305" y="271" width="14" height="1" fill="#808080" />
<rect x="318" y="256" width="1" height="16" fill="#808080" />
<rect x="310" y="265" width="5" height="1.3" fill="#000" />
<rect x="312" y="263" width="1.3" height="5" fill="#000" />
<rect x="322" y="255" width="16" height="18" fill="#D4D0C8" />
<rect x="322" y="255" width="15" height="1" fill="#FFFFFF" />
<rect x="322" y="255" width="1" height="17" fill="#FFFFFF" />
<rect x="322" y="272" width="16" height="1" fill="#404040" />
<rect x="337" y="255" width="1" height="18" fill="#404040" />
<rect x="323" y="271" width="14" height="1" fill="#808080" />
<rect x="336" y="256" width="1" height="16" fill="#808080" />
<rect x="329.5" y="265" width="3" height="1.3" fill="#000" />
<rect x="9" y="276" width="13" height="13" fill="#FFFFFF" />
<rect x="9" y="276" width="12" height="1" fill="#808080" />
<rect x="9" y="276" width="1" height="12" fill="#808080" />
<rect x="10" y="277" width="10" height="1" fill="#404040" />
<rect x="10" y="277" width="1" height="10" fill="#404040" />
<rect x="9" y="288" width="13" height="1" fill="#FFFFFF" />
<rect x="21" y="276" width="1" height="13" fill="#FFFFFF" />
<rect x="10" y="287" width="11" height="1" fill="#D4D0C8" />
<rect x="20" y="277" width="1" height="11" fill="#D4D0C8" />
<text x="27.5" y="286" font-size="12" fill="#000" font-weight="normal" text-anchor="start" textLength="31" lengthAdjust="spacingAndGlyphs" >Linked</text>
<rect x="321" y="275" width="16" height="18" fill="#D4D0C8" />
<rect x="321" y="275" width="15" height="1" fill="#FFFFFF" />
<rect x="321" y="275" width="1" height="17" fill="#FFFFFF" />
<rect x="321" y="292" width="16" height="1" fill="#404040" />
<rect x="336" y="275" width="1" height="18" fill="#404040" />
<rect x="322" y="291" width="14" height="1" fill="#808080" />
<rect x="335" y="276" width="1" height="16" fill="#808080" />
<text x="326.4" y="288.7" font-size="11.5" fill="#000" font-weight="normal" text-anchor="start" textLength="6.3" lengthAdjust="spacingAndGlyphs" >S</text>
<rect x="7" y="294" width="338" height="414" fill="#000" />
<rect x="8" y="295" width="320" height="412" fill="#FFFFFF" />
<rect x="8" y="295" width="316" height="17" fill="#D4D0C8" />
<rect x="95" y="295" width="1" height="17" fill="#000" />
<rect x="158" y="295" width="1" height="17" fill="#000" />
<rect x="241" y="295" width="1" height="17" fill="#000" />
<rect x="324" y="295" width="1" height="17" fill="#000" />
<text x="10.6" y="308" font-size="12" fill="#000" font-weight="normal" text-anchor="start" textLength="67" lengthAdjust="spacingAndGlyphs" >Symbol,Period</text>
<text x="98.8" y="308" font-size="12" fill="#000" font-weight="normal" text-anchor="start" textLength="47" lengthAdjust="spacingAndGlyphs" >Last Price</text>
<text x="160.8" y="308" font-size="12" fill="#000" font-weight="normal" text-anchor="start" textLength="64" lengthAdjust="spacingAndGlyphs" >Volume Scan</text>
<text x="244.1" y="307.7" font-size="12" fill="#000" font-weight="normal" text-anchor="start" textLength="49.2" lengthAdjust="spacingAndGlyphs" >VSA Scan</text>
<rect x="95" y="312" width="1" height="46" fill="#C0C0C0" />
<rect x="158" y="312" width="1" height="46" fill="#C0C0C0" />
<rect x="241" y="312" width="1" height="46" fill="#C0C0C0" />
<rect x="324" y="312" width="1" height="46" fill="#C0C0C0" />
<text x="10.6" y="326" font-size="13" fill="#000" font-weight="normal" text-anchor="start" textLength="69" lengthAdjust="spacingAndGlyphs" >EUR A0-FX,1</text>
<text x="154.8" y="326" font-size="13" fill="#FF0000" font-weight="normal" text-anchor="end" textLength="35.5" lengthAdjust="spacingAndGlyphs" >1.3874</text>
<rect x="8" y="335" width="87" height="23" fill="#808080" />
<rect x="95" y="335" width="229" height="23" fill="#C0C0C0" />
<text x="10.6" y="349" font-size="13" fill="#FFF" font-weight="normal" text-anchor="start" textLength="79.5" lengthAdjust="spacingAndGlyphs" >EUR A0-FX,1H</text>
<text x="154.8" y="349" font-size="13" fill="#FF0000" font-weight="normal" text-anchor="end" textLength="35.5" lengthAdjust="spacingAndGlyphs" >1.3874</text>
<rect x="162" y="337" width="13.5" height="12.5" fill="#F79B91" />
<text x="164.5" y="347.5" font-size="11" fill="#202020" font-weight="bold" text-anchor="start" >H</text>
<rect x="177.7" y="338" width="12.5" height="11" fill="#FFC8DC" />
<text x="180.8" y="347" font-size="9" fill="#202020" font-weight="bold" text-anchor="start" >H</text>
<polygon points="247.40,322.50 250.50,319.40 253.60,322.50 250.50,325.60" fill="#FF0000" stroke="#000" stroke-width="1" />
<polygon points="247.40,345.40 250.50,342.30 253.60,345.40 250.50,348.50" fill="#FF0000" stroke="#000" stroke-width="1" />
<polygon points="263.30,322.50 266.40,319.40 269.50,322.50 266.40,325.60" fill="#FFFFFF" stroke="#000" stroke-width="1" />
<polygon points="263.30,345.40 266.40,342.30 269.50,345.40 266.40,348.50" fill="#FF0000" stroke="#000" stroke-width="1" />
<polygon points="279.40,322.50 282.50,319.40 285.60,322.50 282.50,325.60" fill="#FF0000" stroke="#000" stroke-width="1" />
<polygon points="279.40,345.40 282.50,342.30 285.60,345.40 282.50,348.50" fill="#FF0000" stroke="#000" stroke-width="1" />
<polygon points="295.40,322.50 298.50,319.40 301.60,322.50 298.50,325.60" fill="#FF0000" stroke="#000" stroke-width="1" />
<polygon points="295.40,345.40 298.50,342.30 301.60,345.40 298.50,348.50" fill="#FF0000" stroke="#000" stroke-width="1" />
<polygon points="311.40,322.50 314.50,319.40 317.60,322.50 314.50,325.60" fill="#FF0000" stroke="#000" stroke-width="1" />
<polygon points="311.40,345.40 314.50,342.30 317.60,345.40 314.50,348.50" fill="#FF0000" stroke="#000" stroke-width="1" />
<polygon points="250.50,351.30 245.20,356.60 255.80,356.60" fill="#00F000" stroke="#000" stroke-width="1" />
<polygon points="266.40,351.30 261.10,356.60 271.70,356.60" fill="#00F000" stroke="#000" stroke-width="1" />
<rect x="328" y="295" width="16" height="412" fill="url(#dith)" />
<rect x="328" y="295" width="16" height="16" fill="#D4D0C8" />
<rect x="328" y="295" width="15" height="1" fill="#FFFFFF" />
<rect x="328" y="295" width="1" height="15" fill="#FFFFFF" />
<rect x="328" y="310" width="16" height="1" fill="#404040" />
<rect x="343" y="295" width="1" height="16" fill="#404040" />
<rect x="329" y="309" width="14" height="1" fill="#808080" />
<rect x="342" y="296" width="1" height="14" fill="#808080" />
<polygon points="332.00,306.00 340.00,306.00 336.00,301.50" fill="#000" />
<rect x="328" y="438" width="16" height="253" fill="#D4D0C8" />
<rect x="328" y="438" width="15" height="1" fill="#FFFFFF" />
<rect x="328" y="438" width="1" height="252" fill="#FFFFFF" />
<rect x="328" y="690" width="16" height="1" fill="#404040" />
<rect x="343" y="438" width="1" height="253" fill="#404040" />
<rect x="329" y="689" width="14" height="1" fill="#808080" />
<rect x="342" y="439" width="1" height="251" fill="#808080" />
<rect x="328" y="691" width="16" height="16" fill="#D4D0C8" />
<rect x="328" y="691" width="15" height="1" fill="#FFFFFF" />
<rect x="328" y="691" width="1" height="15" fill="#FFFFFF" />
<rect x="328" y="706" width="16" height="1" fill="#404040" />
<rect x="343" y="691" width="1" height="16" fill="#404040" />
<rect x="329" y="705" width="14" height="1" fill="#808080" />
<rect x="342" y="692" width="1" height="14" fill="#808080" />
<polygon points="332.00,697.00 340.00,697.00 336.00,701.50" fill="#000" />
<rect x="358" y="122" width="970" height="564" fill="#000" />
<rect x="359" y="123" width="968" height="539" fill="#FFFFFF" />
<rect x="359" y="663" width="968" height="21" fill="#D4D0C8" />
<g shape-rendering="crispEdges">
<rect x="359" y="548" width="904" height="114" fill="#F79B91" />
<rect x="359" y="562" width="13" height="100" fill="#FFC8DC" />
<rect x="359" y="577" width="13" height="85" fill="#CDCDFF" />
<rect x="359" y="605" width="13" height="57" fill="#CDE6FF" />
<rect x="359" y="618" width="13" height="44" fill="#CDCDFF" />
<rect x="359" y="647" width="13" height="15" fill="#FFC8DC" />
<rect x="372" y="569" width="8" height="93" fill="#FFC8DC" />
<rect x="372" y="583" width="8" height="79" fill="#CDCDFF" />
<rect x="372" y="609" width="8" height="53" fill="#CDE6FF" />
<rect x="372" y="621" width="8" height="41" fill="#CDCDFF" />
<rect x="372" y="648" width="8" height="14" fill="#FFC8DC" />
<rect x="380" y="576" width="10" height="86" fill="#FFC8DC" />
<rect x="380" y="588" width="10" height="74" fill="#CDCDFF" />
<rect x="380" y="613" width="10" height="49" fill="#CDE6FF" />
<rect x="380" y="624" width="10" height="38" fill="#CDCDFF" />
<rect x="380" y="649" width="10" height="13" fill="#FFC8DC" />
<rect x="390" y="582" width="8" height="80" fill="#FFC8DC" />
<rect x="390" y="594" width="8" height="68" fill="#CDCDFF" />
<rect x="390" y="616" width="8" height="46" fill="#CDE6FF" />
<rect x="390" y="627" width="8" height="35" fill="#CDCDFF" />
<rect x="390" y="650" width="8" height="12" fill="#FFC8DC" />
<rect x="398" y="587" width="10" height="75" fill="#FFC8DC" />
<rect x="398" y="598" width="10" height="64" fill="#CDCDFF" />
<rect x="398" y="619" width="10" height="43" fill="#CDE6FF" />
<rect x="398" y="629" width="10" height="33" fill="#CDCDFF" />
<rect x="398" y="651" width="10" height="11" fill="#FFC8DC" />
<rect x="408" y="591" width="8" height="71" fill="#FFC8DC" />
<rect x="408" y="601" width="8" height="61" fill="#CDCDFF" />
<rect x="408" y="622" width="8" height="40" fill="#CDE6FF" />
<rect x="408" y="631" width="8" height="31" fill="#CDCDFF" />
<rect x="408" y="651" width="8" height="11" fill="#FFC8DC" />
<rect x="416" y="596" width="9" height="66" fill="#FFC8DC" />
<rect x="416" y="606" width="9" height="56" fill="#CDCDFF" />
<rect x="416" y="624" width="9" height="38" fill="#CDE6FF" />
<rect x="416" y="633" width="9" height="29" fill="#CDCDFF" />
<rect x="416" y="652" width="9" height="10" fill="#FFC8DC" />
<rect x="425" y="603" width="9" height="59" fill="#FFC8DC" />
<rect x="425" y="612" width="9" height="50" fill="#CDCDFF" />
<rect x="425" y="629" width="9" height="33" fill="#CDE6FF" />
<rect x="425" y="636" width="9" height="26" fill="#CDCDFF" />
<rect x="425" y="653" width="9" height="9" fill="#FFC8DC" />
<rect x="434" y="612" width="8" height="50" fill="#FFC8DC" />
<rect x="434" y="619" width="8" height="43" fill="#CDCDFF" />
<rect x="434" y="633" width="8" height="29" fill="#CDE6FF" />
<rect x="434" y="640" width="8" height="22" fill="#CDCDFF" />
<rect x="434" y="654" width="8" height="8" fill="#FFC8DC" />
<rect x="442" y="619" width="10" height="43" fill="#FFC8DC" />
<rect x="442" y="625" width="10" height="37" fill="#CDCDFF" />
<rect x="442" y="637" width="10" height="25" fill="#CDE6FF" />
<rect x="442" y="643" width="10" height="19" fill="#CDCDFF" />
<rect x="442" y="656" width="10" height="6" fill="#FFC8DC" />
<rect x="452" y="622" width="8" height="40" fill="#FFC8DC" />
<rect x="452" y="628" width="8" height="34" fill="#CDCDFF" />
<rect x="452" y="639" width="8" height="23" fill="#CDE6FF" />
<rect x="452" y="645" width="8" height="17" fill="#CDCDFF" />
<rect x="452" y="656" width="8" height="6" fill="#FFC8DC" />
<rect x="460" y="622" width="10" height="40" fill="#FFC8DC" />
<rect x="460" y="628" width="10" height="34" fill="#CDCDFF" />
<rect x="460" y="639" width="10" height="23" fill="#CDE6FF" />
<rect x="460" y="645" width="10" height="17" fill="#CDCDFF" />
<rect x="460" y="656" width="10" height="6" fill="#FFC8DC" />
<rect x="470" y="619" width="8" height="43" fill="#FFC8DC" />
<rect x="470" y="625" width="8" height="37" fill="#CDCDFF" />
<rect x="470" y="637" width="8" height="25" fill="#CDE6FF" />
<rect x="470" y="643" width="8" height="19" fill="#CDCDFF" />
<rect x="470" y="656" width="8" height="6" fill="#FFC8DC" />
<rect x="478" y="614" width="9" height="48" fill="#FFC8DC" />
<rect x="478" y="621" width="9" height="41" fill="#CDCDFF" />
<rect x="478" y="635" width="9" height="27" fill="#CDE6FF" />
<rect x="478" y="641" width="9" height="21" fill="#CDCDFF" />
<rect x="478" y="655" width="9" height="7" fill="#FFC8DC" />
<rect x="487" y="610" width="9" height="52" fill="#FFC8DC" />
<rect x="487" y="618" width="9" height="44" fill="#CDCDFF" />
<rect x="487" y="633" width="9" height="29" fill="#CDE6FF" />
<rect x="487" y="639" width="9" height="23" fill="#CDCDFF" />
<rect x="487" y="654" width="9" height="8" fill="#FFC8DC" />
<rect x="496" y="607" width="8" height="55" fill="#FFC8DC" />
<rect x="496" y="615" width="8" height="47" fill="#CDCDFF" />
<rect x="496" y="631" width="8" height="31" fill="#CDE6FF" />
<rect x="496" y="638" width="8" height="24" fill="#CDCDFF" />
<rect x="496" y="654" width="8" height="8" fill="#FFC8DC" />
<rect x="504" y="602" width="10" height="60" fill="#FFC8DC" />
<rect x="504" y="611" width="10" height="51" fill="#CDCDFF" />
<rect x="504" y="628" width="10" height="34" fill="#CDE6FF" />
<rect x="504" y="636" width="10" height="26" fill="#CDCDFF" />
<rect x="504" y="653" width="10" height="9" fill="#FFC8DC" />
<rect x="514" y="591" width="8" height="71" fill="#FFC8DC" />
<rect x="514" y="601" width="8" height="61" fill="#CDCDFF" />
<rect x="514" y="622" width="8" height="40" fill="#CDE6FF" />
<rect x="514" y="631" width="8" height="31" fill="#CDCDFF" />
<rect x="514" y="651" width="8" height="11" fill="#FFC8DC" />
<rect x="522" y="582" width="10" height="80" fill="#FFC8DC" />
<rect x="522" y="593" width="10" height="69" fill="#CDCDFF" />
<rect x="522" y="616" width="10" height="46" fill="#CDE6FF" />
<rect x="522" y="627" width="10" height="35" fill="#CDCDFF" />
<rect x="522" y="650" width="10" height="12" fill="#FFC8DC" />
<rect x="532" y="573" width="8" height="89" fill="#FFC8DC" />
<rect x="532" y="586" width="8" height="76" fill="#CDCDFF" />
<rect x="532" y="611" width="8" height="51" fill="#CDE6FF" />
<rect x="532" y="623" width="8" height="39" fill="#CDCDFF" />
<rect x="532" y="649" width="8" height="13" fill="#FFC8DC" />
<rect x="540" y="566" width="9" height="96" fill="#FFC8DC" />
<rect x="540" y="580" width="9" height="82" fill="#CDCDFF" />
<rect x="540" y="608" width="9" height="54" fill="#CDE6FF" />
<rect x="540" y="620" width="9" height="42" fill="#CDCDFF" />
<rect x="540" y="648" width="9" height="14" fill="#FFC8DC" />
<rect x="549" y="564" width="9" height="98" fill="#FFC8DC" />
<rect x="549" y="579" width="9" height="83" fill="#CDCDFF" />
<rect x="549" y="606" width="9" height="56" fill="#CDE6FF" />
<rect x="549" y="619" width="9" height="43" fill="#CDCDFF" />
<rect x="549" y="647" width="9" height="15" fill="#FFC8DC" />
<rect x="558" y="564" width="8" height="98" fill="#FFC8DC" />
<rect x="558" y="579" width="8" height="83" fill="#CDCDFF" />
<rect x="558" y="606" width="8" height="56" fill="#CDE6FF" />
<rect x="558" y="619" width="8" height="43" fill="#CDCDFF" />
<rect x="558" y="647" width="8" height="15" fill="#FFC8DC" />
<rect x="566" y="564" width="10" height="98" fill="#FFC8DC" />
<rect x="566" y="579" width="10" height="83" fill="#CDCDFF" />
<rect x="566" y="606" width="10" height="56" fill="#CDE6FF" />
<rect x="566" y="619" width="10" height="43" fill="#CDCDFF" />
<rect x="566" y="647" width="10" height="15" fill="#FFC8DC" />
<rect x="576" y="564" width="8" height="98" fill="#FFC8DC" />
<rect x="576" y="579" width="8" height="83" fill="#CDCDFF" />
<rect x="576" y="606" width="8" height="56" fill="#CDE6FF" />
<rect x="576" y="619" width="8" height="43" fill="#CDCDFF" />
<rect x="576" y="647" width="8" height="15" fill="#FFC8DC" />
<rect x="584" y="566" width="10" height="96" fill="#FFC8DC" />
<rect x="584" y="580" width="10" height="82" fill="#CDCDFF" />
<rect x="584" y="608" width="10" height="54" fill="#CDE6FF" />
<rect x="584" y="620" width="10" height="42" fill="#CDCDFF" />
<rect x="584" y="648" width="10" height="14" fill="#FFC8DC" />
<rect x="594" y="574" width="8" height="88" fill="#FFC8DC" />
<rect x="594" y="587" width="8" height="75" fill="#CDCDFF" />
<rect x="594" y="612" width="8" height="50" fill="#CDE6FF" />
<rect x="594" y="623" width="8" height="39" fill="#CDCDFF" />
<rect x="594" y="649" width="8" height="13" fill="#FFC8DC" />
<rect x="602" y="579" width="10" height="83" fill="#FFC8DC" />
<rect x="602" y="591" width="10" height="71" fill="#CDCDFF" />
<rect x="602" y="615" width="10" height="47" fill="#CDE6FF" />
<rect x="602" y="625" width="10" height="37" fill="#CDCDFF" />
<rect x="602" y="650" width="10" height="12" fill="#FFC8DC" />
<rect x="612" y="583" width="8" height="79" fill="#FFC8DC" />
<rect x="612" y="594" width="8" height="68" fill="#CDCDFF" />
<rect x="612" y="617" width="8" height="45" fill="#CDE6FF" />
<rect x="612" y="627" width="8" height="35" fill="#CDCDFF" />
<rect x="612" y="650" width="8" height="12" fill="#FFC8DC" />
<rect x="620" y="585" width="8" height="77" fill="#FFC8DC" />
<rect x="620" y="596" width="8" height="66" fill="#CDCDFF" />
<rect x="620" y="618" width="8" height="44" fill="#CDE6FF" />
<rect x="620" y="628" width="8" height="34" fill="#CDCDFF" />
<rect x="620" y="650" width="8" height="12" fill="#FFC8DC" />
<rect x="628" y="589" width="10" height="73" fill="#FFC8DC" />
<rect x="628" y="600" width="10" height="62" fill="#CDCDFF" />
<rect x="628" y="620" width="10" height="42" fill="#CDE6FF" />
<rect x="628" y="630" width="10" height="32" fill="#CDCDFF" />
<rect x="628" y="651" width="10" height="11" fill="#FFC8DC" />
<rect x="638" y="601" width="8" height="61" fill="#FFC8DC" />
<rect x="638" y="610" width="8" height="52" fill="#CDCDFF" />
<rect x="638" y="627" width="8" height="35" fill="#CDE6FF" />
<rect x="638" y="635" width="8" height="27" fill="#CDCDFF" />
<rect x="638" y="653" width="8" height="9" fill="#FFC8DC" />
<rect x="646" y="614" width="10" height="48" fill="#FFC8DC" />
<rect x="646" y="621" width="10" height="41" fill="#CDCDFF" />
<rect x="646" y="635" width="10" height="27" fill="#CDE6FF" />
<rect x="646" y="641" width="10" height="21" fill="#CDCDFF" />
<rect x="646" y="655" width="10" height="7" fill="#FFC8DC" />
<rect x="656" y="623" width="8" height="39" fill="#FFC8DC" />
<rect x="656" y="628" width="8" height="34" fill="#CDCDFF" />
<rect x="656" y="640" width="8" height="22" fill="#CDE6FF" />
<rect x="656" y="645" width="8" height="17" fill="#CDCDFF" />
<rect x="656" y="656" width="8" height="6" fill="#FFC8DC" />
<rect x="664" y="627" width="10" height="35" fill="#FFC8DC" />
<rect x="664" y="632" width="10" height="30" fill="#CDCDFF" />
<rect x="664" y="642" width="10" height="20" fill="#CDE6FF" />
<rect x="664" y="647" width="10" height="15" fill="#CDCDFF" />
<rect x="664" y="657" width="10" height="5" fill="#FFC8DC" />
<rect x="674" y="629" width="8" height="33" fill="#FFC8DC" />
<rect x="674" y="633" width="8" height="29" fill="#CDCDFF" />
<rect x="674" y="643" width="8" height="19" fill="#CDE6FF" />
<rect x="674" y="647" width="8" height="15" fill="#CDCDFF" />
<rect x="674" y="657" width="8" height="5" fill="#FFC8DC" />
<rect x="682" y="627" width="8" height="35" fill="#FFC8DC" />
<rect x="682" y="632" width="8" height="30" fill="#CDCDFF" />
<rect x="682" y="642" width="8" height="20" fill="#CDE6FF" />
<rect x="682" y="647" width="8" height="15" fill="#CDCDFF" />
<rect x="682" y="657" width="8" height="5" fill="#FFC8DC" />
<rect x="690" y="624" width="10" height="38" fill="#FFC8DC" />
<rect x="690" y="630" width="10" height="32" fill="#CDCDFF" />
<rect x="690" y="640" width="10" height="22" fill="#CDE6FF" />
<rect x="690" y="645" width="10" height="17" fill="#CDCDFF" />
<rect x="690" y="656" width="10" height="6" fill="#FFC8DC" />
<rect x="700" y="623" width="8" height="39" fill="#FFC8DC" />
<rect x="700" y="628" width="8" height="34" fill="#CDCDFF" />
<rect x="700" y="640" width="8" height="22" fill="#CDE6FF" />
<rect x="700" y="645" width="8" height="17" fill="#CDCDFF" />
<rect x="700" y="656" width="8" height="6" fill="#FFC8DC" />
<rect x="708" y="620" width="10" height="42" fill="#FFC8DC" />
<rect x="708" y="626" width="10" height="36" fill="#CDCDFF" />
<rect x="708" y="638" width="10" height="24" fill="#CDE6FF" />
<rect x="708" y="644" width="10" height="18" fill="#CDCDFF" />
<rect x="708" y="656" width="10" height="6" fill="#FFC8DC" />
<rect x="718" y="615" width="8" height="47" fill="#FFC8DC" />
<rect x="718" y="622" width="8" height="40" fill="#CDCDFF" />
<rect x="718" y="635" width="8" height="27" fill="#CDE6FF" />
<rect x="718" y="641" width="8" height="21" fill="#CDCDFF" />
<rect x="718" y="655" width="8" height="7" fill="#FFC8DC" />
<rect x="726" y="607" width="10" height="55" fill="#FFC8DC" />
<rect x="726" y="615" width="10" height="47" fill="#CDCDFF" />
<rect x="726" y="631" width="10" height="31" fill="#CDE6FF" />
<rect x="726" y="638" width="10" height="24" fill="#CDCDFF" />
<rect x="726" y="654" width="10" height="8" fill="#FFC8DC" />
<rect x="736" y="599" width="8" height="63" fill="#FFC8DC" />
<rect x="736" y="608" width="8" height="54" fill="#CDCDFF" />
<rect x="736" y="626" width="8" height="36" fill="#CDE6FF" />
<rect x="736" y="634" width="8" height="28" fill="#CDCDFF" />
<rect x="736" y="653" width="8" height="9" fill="#FFC8DC" />
<rect x="744" y="590" width="8" height="72" fill="#FFC8DC" />
<rect x="744" y="601" width="8" height="61" fill="#CDCDFF" />
<rect x="744" y="621" width="8" height="41" fill="#CDE6FF" />
<rect x="744" y="630" width="8" height="32" fill="#CDCDFF" />
<rect x="744" y="651" width="8" height="11" fill="#FFC8DC" />
<rect x="752" y="583" width="10" height="79" fill="#FFC8DC" />
<rect x="752" y="594" width="10" height="68" fill="#CDCDFF" />
<rect x="752" y="617" width="10" height="45" fill="#CDE6FF" />
<rect x="752" y="627" width="10" height="35" fill="#CDCDFF" />
<rect x="752" y="650" width="10" height="12" fill="#FFC8DC" />
<rect x="762" y="578" width="8" height="84" fill="#FFC8DC" />
<rect x="762" y="590" width="8" height="72" fill="#CDCDFF" />
<rect x="762" y="614" width="8" height="48" fill="#CDE6FF" />
<rect x="762" y="625" width="8" height="37" fill="#CDCDFF" />
<rect x="762" y="649" width="8" height="13" fill="#FFC8DC" />
<rect x="770" y="575" width="10" height="87" fill="#FFC8DC" />
<rect x="770" y="588" width="10" height="74" fill="#CDCDFF" />
<rect x="770" y="613" width="10" height="49" fill="#CDE6FF" />
<rect x="770" y="624" width="10" height="38" fill="#CDCDFF" />
<rect x="770" y="649" width="10" height="13" fill="#FFC8DC" />
<rect x="780" y="575" width="8" height="87" fill="#FFC8DC" />
<rect x="780" y="587" width="8" height="75" fill="#CDCDFF" />
<rect x="780" y="612" width="8" height="50" fill="#CDE6FF" />
<rect x="780" y="624" width="8" height="38" fill="#CDCDFF" />
<rect x="780" y="649" width="8" height="13" fill="#FFC8DC" />
<rect x="788" y="577" width="10" height="85" fill="#FFC8DC" />
<rect x="788" y="589" width="10" height="73" fill="#CDCDFF" />
<rect x="788" y="613" width="10" height="49" fill="#CDE6FF" />
<rect x="788" y="624" width="10" height="38" fill="#CDCDFF" />
<rect x="788" y="649" width="10" height="13" fill="#FFC8DC" />
<rect x="798" y="581" width="8" height="81" fill="#FFC8DC" />
<rect x="798" y="593" width="8" height="69" fill="#CDCDFF" />
<rect x="798" y="616" width="8" height="46" fill="#CDE6FF" />
<rect x="798" y="626" width="8" height="36" fill="#CDCDFF" />
<rect x="798" y="650" width="8" height="12" fill="#FFC8DC" />
<rect x="806" y="585" width="9" height="77" fill="#FFC8DC" />
<rect x="806" y="596" width="9" height="66" fill="#CDCDFF" />
<rect x="806" y="618" width="9" height="44" fill="#CDE6FF" />
<rect x="806" y="628" width="9" height="34" fill="#CDCDFF" />
<rect x="806" y="650" width="9" height="12" fill="#FFC8DC" />
<rect x="815" y="589" width="9" height="73" fill="#FFC8DC" />
<rect x="815" y="600" width="9" height="62" fill="#CDCDFF" />
<rect x="815" y="620" width="9" height="42" fill="#CDE6FF" />
<rect x="815" y="630" width="9" height="32" fill="#CDCDFF" />
<rect x="815" y="651" width="9" height="11" fill="#FFC8DC" />
<rect x="824" y="594" width="8" height="68" fill="#FFC8DC" />
<rect x="824" y="604" width="8" height="58" fill="#CDCDFF" />
<rect x="824" y="623" width="8" height="39" fill="#CDE6FF" />
<rect x="824" y="632" width="8" height="30" fill="#CDCDFF" />
<rect x="824" y="652" width="8" height="10" fill="#FFC8DC" />
<rect x="832" y="598" width="10" height="64" fill="#FFC8DC" />
<rect x="832" y="607" width="10" height="55" fill="#CDCDFF" />
<rect x="832" y="626" width="10" height="36" fill="#CDE6FF" />
<rect x="832" y="634" width="10" height="28" fill="#CDCDFF" />
<rect x="832" y="652" width="10" height="10" fill="#FFC8DC" />
<rect x="842" y="604" width="8" height="58" fill="#FFC8DC" />
<rect x="842" y="613" width="8" height="49" fill="#CDCDFF" />
<rect x="842" y="629" width="8" height="33" fill="#CDE6FF" />
<rect x="842" y="637" width="8" height="25" fill="#CDCDFF" />
<rect x="842" y="653" width="8" height="9" fill="#FFC8DC" />
<rect x="850" y="616" width="10" height="46" fill="#FFC8DC" />
<rect x="850" y="622" width="10" height="40" fill="#CDCDFF" />
<rect x="850" y="636" width="10" height="26" fill="#CDE6FF" />
<rect x="850" y="642" width="10" height="20" fill="#CDCDFF" />
<rect x="850" y="655" width="10" height="7" fill="#FFC8DC" />
<rect x="860" y="628" width="8" height="34" fill="#FFC8DC" />
<rect x="860" y="633" width="8" height="29" fill="#CDCDFF" />
<rect x="860" y="643" width="8" height="19" fill="#CDE6FF" />
<rect x="860" y="647" width="8" height="15" fill="#CDCDFF" />
<rect x="860" y="657" width="8" height="5" fill="#FFC8DC" />
<rect x="868" y="638" width="9" height="24" fill="#FFC8DC" />
<rect x="868" y="641" width="9" height="21" fill="#CDCDFF" />
<rect x="868" y="648" width="9" height="14" fill="#CDE6FF" />
<rect x="868" y="651" width="9" height="11" fill="#CDCDFF" />
<rect x="868" y="658" width="9" height="4" fill="#FFC8DC" />
<rect x="877" y="643" width="9" height="19" fill="#FFC8DC" />
<rect x="877" y="645" width="9" height="17" fill="#CDCDFF" />
<rect x="877" y="651" width="9" height="11" fill="#CDE6FF" />
<rect x="877" y="653" width="9" height="9" fill="#CDCDFF" />
<rect x="877" y="659" width="9" height="3" fill="#FFC8DC" />
<rect x="886" y="645" width="8" height="17" fill="#FFC8DC" />
<rect x="886" y="647" width="8" height="15" fill="#CDCDFF" />
<rect x="886" y="652" width="8" height="10" fill="#CDE6FF" />
<rect x="886" y="654" width="8" height="8" fill="#CDCDFF" />
<rect x="886" y="659" width="8" height="3" fill="#FFC8DC" />
<rect x="894" y="645" width="10" height="17" fill="#FFC8DC" />
<rect x="894" y="647" width="10" height="15" fill="#CDCDFF" />
<rect x="894" y="652" width="10" height="10" fill="#CDE6FF" />
<rect x="894" y="654" width="10" height="8" fill="#CDCDFF" />
<rect x="894" y="659" width="10" height="3" fill="#FFC8DC" />
<rect x="904" y="645" width="8" height="17" fill="#FFC8DC" />
<rect x="904" y="647" width="8" height="15" fill="#CDCDFF" />
<rect x="904" y="652" width="8" height="10" fill="#CDE6FF" />
<rect x="904" y="654" width="8" height="8" fill="#CDCDFF" />
<rect x="904" y="659" width="8" height="3" fill="#FFC8DC" />
<rect x="912" y="645" width="10" height="17" fill="#FFC8DC" />
<rect x="912" y="647" width="10" height="15" fill="#CDCDFF" />
<rect x="912" y="652" width="10" height="10" fill="#CDE6FF" />
<rect x="912" y="654" width="10" height="8" fill="#CDCDFF" />
<rect x="912" y="659" width="10" height="3" fill="#FFC8DC" />
<rect x="922" y="641" width="8" height="21" fill="#FFC8DC" />
<rect x="922" y="644" width="8" height="18" fill="#CDCDFF" />
<rect x="922" y="650" width="8" height="12" fill="#CDE6FF" />
<rect x="922" y="653" width="8" height="9" fill="#CDCDFF" />
<rect x="922" y="659" width="8" height="3" fill="#FFC8DC" />
<rect x="930" y="636" width="9" height="26" fill="#FFC8DC" />
<rect x="930" y="640" width="9" height="22" fill="#CDCDFF" />
<rect x="930" y="647" width="9" height="15" fill="#CDE6FF" />
<rect x="930" y="651" width="9" height="11" fill="#CDCDFF" />
<rect x="930" y="658" width="9" height="4" fill="#FFC8DC" />
<rect x="939" y="628" width="9" height="34" fill="#FFC8DC" />
<rect x="939" y="633" width="9" height="29" fill="#CDCDFF" />
<rect x="939" y="643" width="9" height="19" fill="#CDE6FF" />
<rect x="939" y="647" width="9" height="15" fill="#CDCDFF" />
<rect x="939" y="657" width="9" height="5" fill="#FFC8DC" />
<rect x="948" y="620" width="8" height="42" fill="#FFC8DC" />
<rect x="948" y="626" width="8" height="36" fill="#CDCDFF" />
<rect x="948" y="638" width="8" height="24" fill="#CDE6FF" />
<rect x="948" y="644" width="8" height="18" fill="#CDCDFF" />
<rect x="948" y="656" width="8" height="6" fill="#FFC8DC" />
<rect x="956" y="612" width="10" height="50" fill="#FFC8DC" />
<rect x="956" y="619" width="10" height="43" fill="#CDCDFF" />
<rect x="956" y="633" width="10" height="29" fill="#CDE6FF" />
<rect x="956" y="640" width="10" height="22" fill="#CDCDFF" />
<rect x="956" y="654" width="10" height="8" fill="#FFC8DC" />
<rect x="966" y="606" width="8" height="56" fill="#FFC8DC" />
<rect x="966" y="614" width="8" height="48" fill="#CDCDFF" />
<rect x="966" y="630" width="8" height="32" fill="#CDE6FF" />
<rect x="966" y="637" width="8" height="25" fill="#CDCDFF" />
<rect x="966" y="654" width="8" height="8" fill="#FFC8DC" />
<rect x="974" y="598" width="10" height="64" fill="#FFC8DC" />
<rect x="974" y="607" width="10" height="55" fill="#CDCDFF" />
<rect x="974" y="626" width="10" height="36" fill="#CDE6FF" />
<rect x="974" y="634" width="10" height="28" fill="#CDCDFF" />
<rect x="974" y="652" width="10" height="10" fill="#FFC8DC" />
<rect x="984" y="592" width="8" height="70" fill="#FFC8DC" />
<rect x="984" y="602" width="8" height="60" fill="#CDCDFF" />
<rect x="984" y="622" width="8" height="40" fill="#CDE6FF" />
<rect x="984" y="631" width="8" height="31" fill="#CDCDFF" />
<rect x="984" y="652" width="8" height="10" fill="#FFC8DC" />
<rect x="992" y="585" width="9" height="77" fill="#FFC8DC" />
<rect x="992" y="596" width="9" height="66" fill="#CDCDFF" />
<rect x="992" y="618" width="9" height="44" fill="#CDE6FF" />
<rect x="992" y="628" width="9" height="34" fill="#CDCDFF" />
<rect x="992" y="650" width="9" height="12" fill="#FFC8DC" />
<rect x="1001" y="578" width="9" height="84" fill="#FFC8DC" />
<rect x="1001" y="590" width="9" height="72" fill="#CDCDFF" />
<rect x="1001" y="614" width="9" height="48" fill="#CDE6FF" />
<rect x="1001" y="625" width="9" height="37" fill="#CDCDFF" />
<rect x="1001" y="649" width="9" height="13" fill="#FFC8DC" />
<rect x="1010" y="570" width="8" height="92" fill="#FFC8DC" />
<rect x="1010" y="583" width="8" height="79" fill="#CDCDFF" />
<rect x="1010" y="609" width="8" height="53" fill="#CDE6FF" />
<rect x="1010" y="621" width="8" height="41" fill="#CDCDFF" />
<rect x="1010" y="648" width="8" height="14" fill="#FFC8DC" />
<rect x="1018" y="561" width="10" height="101" fill="#FFC8DC" />
<rect x="1018" y="576" width="10" height="86" fill="#CDCDFF" />
<rect x="1018" y="605" width="10" height="57" fill="#CDE6FF" />
<rect x="1018" y="618" width="10" height="44" fill="#CDCDFF" />
<rect x="1018" y="647" width="10" height="15" fill="#FFC8DC" />
<rect x="1028" y="557" width="8" height="105" fill="#FFC8DC" />
<rect x="1028" y="573" width="8" height="89" fill="#CDCDFF" />
<rect x="1028" y="602" width="8" height="60" fill="#CDE6FF" />
<rect x="1028" y="616" width="8" height="46" fill="#CDCDFF" />
<rect x="1028" y="646" width="8" height="16" fill="#FFC8DC" />
<rect x="1036" y="554" width="10" height="108" fill="#FFC8DC" />
<rect x="1036" y="570" width="10" height="92" fill="#CDCDFF" />
<rect x="1036" y="600" width="10" height="62" fill="#CDE6FF" />
<rect x="1036" y="614" width="10" height="48" fill="#CDCDFF" />
<rect x="1036" y="646" width="10" height="16" fill="#FFC8DC" />
<rect x="1046" y="553" width="8" height="109" fill="#FFC8DC" />
<rect x="1046" y="569" width="8" height="93" fill="#CDCDFF" />
<rect x="1046" y="600" width="8" height="62" fill="#CDE6FF" />
<rect x="1046" y="614" width="8" height="48" fill="#CDCDFF" />
<rect x="1046" y="646" width="8" height="16" fill="#FFC8DC" />
<rect x="1054" y="556" width="10" height="106" fill="#FFC8DC" />
<rect x="1054" y="571" width="10" height="91" fill="#CDCDFF" />
<rect x="1054" y="602" width="10" height="60" fill="#CDE6FF" />
<rect x="1054" y="615" width="10" height="47" fill="#CDCDFF" />
<rect x="1054" y="646" width="10" height="16" fill="#FFC8DC" />
<rect x="1064" y="561" width="8" height="101" fill="#FFC8DC" />
<rect x="1064" y="575" width="8" height="87" fill="#CDCDFF" />
<rect x="1064" y="604" width="8" height="58" fill="#CDE6FF" />
<rect x="1064" y="617" width="8" height="45" fill="#CDCDFF" />
<rect x="1064" y="647" width="8" height="15" fill="#FFC8DC" />
<rect x="1072" y="568" width="8" height="94" fill="#FFC8DC" />
<rect x="1072" y="582" width="8" height="80" fill="#CDCDFF" />
<rect x="1072" y="609" width="8" height="53" fill="#CDE6FF" />
<rect x="1072" y="621" width="8" height="41" fill="#CDCDFF" />
<rect x="1072" y="648" width="8" height="14" fill="#FFC8DC" />
<rect x="1080" y="575" width="10" height="87" fill="#FFC8DC" />
<rect x="1080" y="587" width="10" height="75" fill="#CDCDFF" />
<rect x="1080" y="612" width="10" height="50" fill="#CDE6FF" />
<rect x="1080" y="624" width="10" height="38" fill="#CDCDFF" />
<rect x="1080" y="649" width="10" height="13" fill="#FFC8DC" />
<rect x="1090" y="580" width="8" height="82" fill="#FFC8DC" />
<rect x="1090" y="592" width="8" height="70" fill="#CDCDFF" />
<rect x="1090" y="615" width="8" height="47" fill="#CDE6FF" />
<rect x="1090" y="626" width="8" height="36" fill="#CDCDFF" />
<rect x="1090" y="650" width="8" height="12" fill="#FFC8DC" />
<rect x="1098" y="583" width="10" height="79" fill="#FFC8DC" />
<rect x="1098" y="594" width="10" height="68" fill="#CDCDFF" />
<rect x="1098" y="617" width="10" height="45" fill="#CDE6FF" />
<rect x="1098" y="627" width="10" height="35" fill="#CDCDFF" />
<rect x="1098" y="650" width="10" height="12" fill="#FFC8DC" />
<rect x="1108" y="585" width="8" height="77" fill="#FFC8DC" />
<rect x="1108" y="596" width="8" height="66" fill="#CDCDFF" />
<rect x="1108" y="618" width="8" height="44" fill="#CDE6FF" />
<rect x="1108" y="628" width="8" height="34" fill="#CDCDFF" />
<rect x="1108" y="650" width="8" height="12" fill="#FFC8DC" />
<rect x="1116" y="590" width="10" height="72" fill="#FFC8DC" />
<rect x="1116" y="601" width="10" height="61" fill="#CDCDFF" />
<rect x="1116" y="621" width="10" height="41" fill="#CDE6FF" />
<rect x="1116" y="630" width="10" height="32" fill="#CDCDFF" />
<rect x="1116" y="651" width="10" height="11" fill="#FFC8DC" />
<rect x="1126" y="599" width="8" height="63" fill="#FFC8DC" />
<rect x="1126" y="608" width="8" height="54" fill="#CDCDFF" />
<rect x="1126" y="626" width="8" height="36" fill="#CDE6FF" />
<rect x="1126" y="634" width="8" height="28" fill="#CDCDFF" />
<rect x="1126" y="653" width="8" height="9" fill="#FFC8DC" />
<rect x="1134" y="608" width="8" height="54" fill="#FFC8DC" />
<rect x="1134" y="616" width="8" height="46" fill="#CDCDFF" />
<rect x="1134" y="631" width="8" height="31" fill="#CDE6FF" />
<rect x="1134" y="638" width="8" height="24" fill="#CDCDFF" />
<rect x="1134" y="654" width="8" height="8" fill="#FFC8DC" />
<rect x="1142" y="613" width="10" height="49" fill="#FFC8DC" />
<rect x="1142" y="620" width="10" height="42" fill="#CDCDFF" />
<rect x="1142" y="634" width="10" height="28" fill="#CDE6FF" />
<rect x="1142" y="640" width="10" height="22" fill="#CDCDFF" />
<rect x="1142" y="655" width="10" height="7" fill="#FFC8DC" />
<rect x="1152" y="611" width="8" height="51" fill="#FFC8DC" />
<rect x="1152" y="618" width="8" height="44" fill="#CDCDFF" />
<rect x="1152" y="633" width="8" height="29" fill="#CDE6FF" />
<rect x="1152" y="640" width="8" height="22" fill="#CDCDFF" />
<rect x="1152" y="654" width="8" height="8" fill="#FFC8DC" />
<rect x="1160" y="608" width="10" height="54" fill="#FFC8DC" />
<rect x="1160" y="615" width="10" height="47" fill="#CDCDFF" />
<rect x="1160" y="631" width="10" height="31" fill="#CDE6FF" />
<rect x="1160" y="638" width="10" height="24" fill="#CDCDFF" />
<rect x="1160" y="654" width="10" height="8" fill="#FFC8DC" />
<rect x="1170" y="602" width="8" height="60" fill="#FFC8DC" />
<rect x="1170" y="611" width="8" height="51" fill="#CDCDFF" />
<rect x="1170" y="628" width="8" height="34" fill="#CDE6FF" />
<rect x="1170" y="636" width="8" height="26" fill="#CDCDFF" />
<rect x="1170" y="653" width="8" height="9" fill="#FFC8DC" />
<rect x="1178" y="596" width="10" height="66" fill="#FFC8DC" />
<rect x="1178" y="606" width="10" height="56" fill="#CDCDFF" />
<rect x="1178" y="624" width="10" height="38" fill="#CDE6FF" />
<rect x="1178" y="633" width="10" height="29" fill="#CDCDFF" />
<rect x="1178" y="652" width="10" height="10" fill="#FFC8DC" />
<rect x="1188" y="590" width="8" height="72" fill="#FFC8DC" />
<rect x="1188" y="601" width="8" height="61" fill="#CDCDFF" />
<rect x="1188" y="621" width="8" height="41" fill="#CDE6FF" />
<rect x="1188" y="630" width="8" height="32" fill="#CDCDFF" />
<rect x="1188" y="651" width="8" height="11" fill="#FFC8DC" />
<rect x="1196" y="586" width="8" height="76" fill="#FFC8DC" />
<rect x="1196" y="597" width="8" height="65" fill="#CDCDFF" />
<rect x="1196" y="619" width="8" height="43" fill="#CDE6FF" />
<rect x="1196" y="629" width="8" height="33" fill="#CDCDFF" />
<rect x="1196" y="651" width="8" height="11" fill="#FFC8DC" />
<rect x="1204" y="579" width="10" height="83" fill="#FFC8DC" />
<rect x="1204" y="591" width="10" height="71" fill="#CDCDFF" />
<rect x="1204" y="615" width="10" height="47" fill="#CDE6FF" />
<rect x="1204" y="626" width="10" height="36" fill="#CDCDFF" />
<rect x="1204" y="650" width="10" height="12" fill="#FFC8DC" />
<rect x="1214" y="579" width="8" height="83" fill="#FFC8DC" />
<rect x="1214" y="591" width="8" height="71" fill="#CDCDFF" />
<rect x="1214" y="615" width="8" height="47" fill="#CDE6FF" />
<rect x="1214" y="626" width="8" height="36" fill="#CDCDFF" />
<rect x="1214" y="650" width="8" height="12" fill="#FFC8DC" />
<rect x="1222" y="579" width="41" height="83" fill="#FFC8DC" />
<rect x="1222" y="591" width="41" height="71" fill="#CDCDFF" />
<rect x="1222" y="615" width="41" height="47" fill="#CDE6FF" />
<rect x="1222" y="626" width="41" height="36" fill="#CDCDFF" />
<rect x="1222" y="650" width="41" height="12" fill="#FFC8DC" />
<rect x="366" y="631" width="2" height="31" fill="#FF0000" />
<rect x="375" y="644" width="2" height="18" fill="#FF00FF" />
<rect x="384" y="651" width="2" height="11" fill="#FF00FF" />
<rect x="393" y="650" width="2" height="12" fill="#FF0000" />
<rect x="402" y="649" width="2" height="13" fill="#0000FF" />
<rect x="411" y="644" width="2" height="18" fill="#FF0000" />
<rect x="420" y="643" width="2" height="19" fill="#000000" />
<rect x="428" y="647" width="2" height="15" fill="#FF00FF" />
<rect x="437" y="646" width="2" height="16" fill="#0000FF" />
<rect x="446" y="651" width="2" height="11" fill="#FF00FF" />
<rect x="455" y="633" width="2" height="29" fill="#0000FF" />
<rect x="464" y="633" width="2" height="29" fill="#FF0000" />
<rect x="473" y="626" width="2" height="36" fill="#000000" />
<rect x="482" y="610" width="2" height="52" fill="#FF0000" />
<rect x="490" y="604" width="2" height="58" fill="#0000FF" />
<rect x="499" y="620" width="2" height="42" fill="#FF00FF" />
<rect x="508" y="624" width="2" height="38" fill="#FF00FF" />
<rect x="517" y="622" width="2" height="40" fill="#FF0000" />
<rect x="526" y="558" width="2" height="104" fill="#0000FF" />
<rect x="535" y="577" width="2" height="85" fill="#FF0000" />
<rect x="544" y="589" width="2" height="73" fill="#FF00FF" />
<rect x="552" y="609" width="2" height="53" fill="#FF00FF" />
<rect x="561" y="629" width="2" height="33" fill="#FF00FF" />
<rect x="570" y="643" width="2" height="19" fill="#FF00FF" />
<rect x="579" y="639" width="2" height="23" fill="#0000FF" />
<rect x="588" y="637" width="2" height="25" fill="#0000FF" />
<rect x="597" y="643" width="2" height="19" fill="#FF00FF" />
<rect x="606" y="650" width="2" height="12" fill="#FF00FF" />
<rect x="615" y="647" width="2" height="15" fill="#FF0000" />
<rect x="623" y="642" width="2" height="20" fill="#0000FF" />
<rect x="632" y="644" width="2" height="18" fill="#FF0000" />
<rect x="641" y="649" width="2" height="13" fill="#FF00FF" />
<rect x="650" y="652" width="2" height="10" fill="#FF00FF" />
<rect x="659" y="654" width="2" height="8" fill="#FF00FF" />
<rect x="668" y="655" width="2" height="7" fill="#FF00FF" />
<rect x="677" y="642" width="2" height="20" fill="#FF0000" />
<rect x="685" y="629" width="2" height="33" fill="#0000FF" />
<rect x="694" y="627" width="2" height="35" fill="#FF0000" />
<rect x="703" y="631" width="2" height="31" fill="#FF00FF" />
<rect x="712" y="625" width="2" height="37" fill="#0000FF" />
<rect x="721" y="631" width="2" height="31" fill="#0000FF" />
<rect x="730" y="622" width="2" height="40" fill="#FF0000" />
<rect x="739" y="579" width="2" height="83" fill="#FF0000" />
<rect x="747" y="577" width="2" height="85" fill="#0000FF" />
<rect x="756" y="586" width="2" height="76" fill="#FF00FF" />
<rect x="765" y="605" width="2" height="57" fill="#FF00FF" />
<rect x="774" y="622" width="2" height="40" fill="#FF00FF" />
<rect x="783" y="639" width="2" height="23" fill="#FF00FF" />
<rect x="792" y="643" width="2" height="19" fill="#FF00FF" />
<rect x="801" y="648" width="2" height="14" fill="#FF00FF" />
<rect x="810" y="656" width="2" height="6" fill="#FF00FF" />
<rect x="818" y="661" width="2" height="1" fill="#FF00FF" />
<rect x="827" y="661" width="2" height="1" fill="#FF00FF" />
<rect x="836" y="661" width="2" height="1" fill="#0000FF" />
<rect x="845" y="661" width="2" height="1" fill="#FF0000" />
<rect x="854" y="661" width="2" height="1" fill="#FF00FF" />
<rect x="863" y="661" width="2" height="1" fill="#0000FF" />
<rect x="872" y="654" width="2" height="8" fill="#000000" />
<rect x="880" y="650" width="2" height="12" fill="#FF0000" />
<rect x="889" y="645" width="2" height="17" fill="#FF0000" />
<rect x="898" y="641" width="2" height="21" fill="#0000FF" />
<rect x="907" y="642" width="2" height="20" fill="#FF0000" />
<rect x="916" y="645" width="2" height="17" fill="#FF00FF" />
<rect x="925" y="640" width="2" height="22" fill="#FF0000" />
<rect x="934" y="635" width="2" height="27" fill="#0000FF" />
<rect x="942" y="632" width="2" height="30" fill="#FF0000" />
<rect x="951" y="603" width="2" height="59" fill="#FF0000" />
<rect x="960" y="600" width="2" height="62" fill="#0000FF" />
<rect x="969" y="597" width="2" height="65" fill="#0000FF" />
<rect x="978" y="613" width="2" height="49" fill="#FF00FF" />
<rect x="987" y="612" width="2" height="50" fill="#0000FF" />
<rect x="996" y="619" width="2" height="43" fill="#FF00FF" />
<rect x="1004" y="597" width="2" height="65" fill="#FF0000" />
<rect x="1013" y="585" width="2" height="77" fill="#FF0000" />
<rect x="1022" y="584" width="2" height="78" fill="#0000FF" />
<rect x="1031" y="590" width="2" height="72" fill="#FF00FF" />
<rect x="1040" y="619" width="2" height="43" fill="#FF00FF" />
<rect x="1049" y="621" width="2" height="41" fill="#FF00FF" />
<rect x="1058" y="629" width="2" height="33" fill="#FF00FF" />
<rect x="1067" y="641" width="2" height="21" fill="#FF00FF" />
<rect x="1075" y="649" width="2" height="13" fill="#FF00FF" />
<rect x="1084" y="648" width="2" height="14" fill="#0000FF" />
<rect x="1093" y="645" width="2" height="17" fill="#FF0000" />
<rect x="1102" y="639" width="2" height="23" fill="#0000FF" />
<rect x="1111" y="639" width="2" height="23" fill="#FF0000" />
<rect x="1120" y="640" width="2" height="22" fill="#FF00FF" />
<rect x="1129" y="643" width="2" height="19" fill="#FF00FF" />
<rect x="1137" y="642" width="2" height="20" fill="#0000FF" />
<rect x="1146" y="643" width="2" height="19" fill="#FF0000" />
<rect x="1155" y="623" width="2" height="39" fill="#FF0000" />
<rect x="1164" y="601" width="2" height="61" fill="#FF0000" />
<rect x="1173" y="594" width="2" height="68" fill="#FF0000" />
<rect x="1182" y="600" width="2" height="62" fill="#FF0000" />
<rect x="1191" y="606" width="2" height="56" fill="#FF00FF" />
<rect x="1199" y="620" width="2" height="42" fill="#FF00FF" />
<rect x="1208" y="606" width="2" height="56" fill="#FF0000" />
<rect x="1217" y="592" width="2" height="70" fill="#0000FF" />
<rect x="1226" y="630" width="2" height="32" fill="#FF00FF" />
<rect x="1236" y="661" width="2" height="1" fill="#FF00FF" />
<rect x="1245" y="661" width="2" height="1" fill="#404040" />
<rect x="1254" y="661" width="2" height="1" fill="#404040" />
</g>
<polyline points="367.0,612.1 376.0,612.1 385.0,615.6 394.0,618.9 403.0,622.0 412.0,624.5 421.0,626.6 429.0,629.0 438.0,632.7 447.0,636.9 456.0,640.4 465.0,642.2 474.0,642.2 483.0,640.4 491.0,637.9 500.0,636.2 509.0,634.4 518.0,632.1 527.0,626.6 536.0,621.8 545.0,617.7 553.0,614.2 562.0,613.2 571.0,613.2 580.0,613.2 589.0,613.2 598.0,614.2 607.0,617.9 616.0,620.4 624.0,622.4 633.0,623.5 642.0,625.5 651.0,631.7 660.0,637.9 669.0,642.4 678.0,644.7 686.0,645.3 695.0,644.5 704.0,643.1 713.0,642.4 722.0,641.0 731.0,638.5 740.0,634.4 748.0,630.7 757.0,626.2 766.0,622.4 775.0,620.0 784.0,618.7 793.0,618.3 802.0,619.3 811.0,621.4 819.0,623.5 828.0,625.5 837.0,628.2 846.0,630.1 855.0,633.2 864.0,638.9 873.0,645.1 881.0,649.9 890.0,652.3 899.0,653.4 908.0,653.4 917.0,653.4 926.0,653.4 935.0,651.3 943.0,649.2 952.0,645.1 961.0,641.0 970.0,636.9 979.0,633.8 988.0,630.1 997.0,627.0 1005.0,623.5 1014.0,620.0 1023.0,615.8 1032.0,611.7 1041.0,609.7 1050.0,608.0 1059.0,607.4 1068.0,609.0 1076.0,611.4 1085.0,615.2 1094.0,618.3 1103.0,620.8 1112.0,622.4 1121.0,623.5 1130.0,626.2 1138.0,630.7 1147.0,635.2 1156.0,637.3 1165.0,636.5 1174.0,634.8 1183.0,632.1 1192.0,629.0 1200.0,626.2 1209.0,624.1 1218.0,622.0" fill="none" stroke="#14305C" stroke-width="1.2"/>
<g shape-rendering="crispEdges">
<rect x="359" y="542" width="968" height="1" fill="#808890" />
<rect x="359" y="543" width="968" height="1" fill="#0A246A" />
<rect x="359" y="544" width="968" height="2" fill="#FFFFFF" />
<rect x="359" y="545" width="968" height="1" fill="#C0C4D0" />
<rect x="359" y="546" width="968" height="1" fill="#0A246A" />
<rect x="359" y="547" width="968" height="1" fill="#FFFFFF" />
<rect x="1264" y="548" width="63" height="114" fill="#FFFFFF" />
<line x1="361" y1="144.5" x2="1258" y2="144.5" stroke="#000" stroke-width="1" stroke-dasharray="1 5"/>
<line x1="361" y1="225.5" x2="1258" y2="225.5" stroke="#000" stroke-width="1" stroke-dasharray="1 5"/>
<line x1="361" y1="307.5" x2="1258" y2="307.5" stroke="#000" stroke-width="1" stroke-dasharray="1 5"/>
<line x1="361" y1="388.5" x2="1258" y2="388.5" stroke="#000" stroke-width="1" stroke-dasharray="1 5"/>
<line x1="361" y1="470.5" x2="1258" y2="470.5" stroke="#000" stroke-width="1" stroke-dasharray="1 5"/>
<rect x="1263" y="123" width="1" height="419" fill="#000" />
<rect x="1263" y="548" width="1" height="136" fill="#000" />
<rect x="1263" y="144" width="11" height="1" fill="#000" />
<rect x="1263" y="160" width="6" height="1" fill="#000" />
<rect x="1263" y="177" width="6" height="1" fill="#000" />
<rect x="1263" y="193" width="6" height="1" fill="#000" />
<rect x="1263" y="209" width="6" height="1" fill="#000" />
<rect x="1263" y="225" width="11" height="1" fill="#000" />
<rect x="1263" y="242" width="6" height="1" fill="#000" />
<rect x="1263" y="258" width="6" height="1" fill="#000" />
<rect x="1263" y="274" width="6" height="1" fill="#000" />
<rect x="1263" y="290" width="6" height="1" fill="#000" />
<rect x="1263" y="307" width="11" height="1" fill="#000" />
<rect x="1263" y="323" width="6" height="1" fill="#000" />
<rect x="1263" y="339" width="6" height="1" fill="#000" />
<rect x="1263" y="356" width="6" height="1" fill="#000" />
<rect x="1263" y="372" width="6" height="1" fill="#000" />
<rect x="1263" y="388" width="11" height="1" fill="#000" />
<rect x="1263" y="405" width="6" height="1" fill="#000" />
<rect x="1263" y="421" width="6" height="1" fill="#000" />
<rect x="1263" y="437" width="6" height="1" fill="#000" />
<rect x="1263" y="453" width="6" height="1" fill="#000" />
<rect x="1263" y="470" width="11" height="1" fill="#000" />
<rect x="1263" y="486" width="6" height="1" fill="#000" />
<rect x="1263" y="502" width="6" height="1" fill="#000" />
<rect x="1263" y="519" width="6" height="1" fill="#000" />
<rect x="1263" y="535" width="6" height="1" fill="#000" />
<rect x="1266" y="126" width="1" height="1" fill="#000" />
</g>
<text x="1276.8" y="149.7" font-size="12" fill="#000" font-weight="normal" text-anchor="start" >1.405</text>
<text x="1276.8" y="230.7" font-size="12" fill="#000" font-weight="normal" text-anchor="start" >1.4</text>
<text x="1276.8" y="312.7" font-size="12" fill="#000" font-weight="normal" text-anchor="start" >1.395</text>
<text x="1276.8" y="393.7" font-size="12" fill="#000" font-weight="normal" text-anchor="start" >1.39</text>
<text x="1276.8" y="475.7" font-size="12" fill="#000" font-weight="normal" text-anchor="start" >1.385</text>
<rect x="1263" y="621" width="11" height="1" fill="#000" />
<text x="1277" y="626.6" font-size="12" fill="#000" font-weight="normal" text-anchor="start" textLength="39.3" lengthAdjust="spacingAndGlyphs" >34.14 k</text>
<rect x="359" y="662" width="968" height="1" fill="#000" />
<rect x="385" y="663" width="1" height="3" fill="#000" />
<text x="385" y="678.8" font-size="12" fill="#000" font-weight="bold" text-anchor="middle" textLength="16" lengthAdjust="spacingAndGlyphs" >3/3</text>
<rect x="598" y="663" width="1" height="3" fill="#000" />
<text x="598" y="678.8" font-size="12" fill="#000" font-weight="bold" text-anchor="middle" textLength="16" lengthAdjust="spacingAndGlyphs" >3/4</text>
<rect x="811" y="663" width="1" height="3" fill="#000" />
<text x="811" y="678.8" font-size="12" fill="#000" font-weight="bold" text-anchor="middle" textLength="16" lengthAdjust="spacingAndGlyphs" >3/5</text>
<rect x="864" y="663" width="1" height="3" fill="#000" />
<text x="864" y="678.8" font-size="12" fill="#000" font-weight="bold" text-anchor="middle" textLength="16" lengthAdjust="spacingAndGlyphs" >3/7</text>
<rect x="1076" y="663" width="1" height="3" fill="#000" />
<text x="1076" y="678.8" font-size="12" fill="#000" font-weight="bold" text-anchor="middle" textLength="16" lengthAdjust="spacingAndGlyphs" >3/8</text>
<rect x="669" y="663" width="1" height="3" fill="#000" />
<rect x="828" y="663" width="1" height="3" fill="#000" />
<text x="1268" y="677.8" font-size="9.5" fill="#000" font-weight="bold" text-anchor="start" textLength="24" lengthAdjust="spacingAndGlyphs" >36:15</text>
<text x="363.8" y="276.8" font-size="12" fill="#000" font-weight="normal" text-anchor="start" textLength="30.7" lengthAdjust="spacingAndGlyphs" >1.3971</text>
<rect x="679.5" y="144.5" width="13" height="6" fill="#FFFF00" stroke="#000" stroke-width="1" shape-rendering="crispEdges"/>
<rect x="706.5" y="144.5" width="13" height="6" fill="#FFFF00" stroke="#000" stroke-width="1" shape-rendering="crispEdges"/>
<rect x="715.5" y="144.5" width="13" height="6" fill="#FFFF00" stroke="#000" stroke-width="1" shape-rendering="crispEdges"/>
<rect x="741.5" y="144.5" width="13" height="6" fill="#FFFF00" stroke="#000" stroke-width="1" shape-rendering="crispEdges"/>
<rect x="945.5" y="144.5" width="13" height="6" fill="#FFFF00" stroke="#000" stroke-width="1" shape-rendering="crispEdges"/>
<rect x="963.5" y="144.5" width="13" height="6" fill="#FFFF00" stroke="#000" stroke-width="1" shape-rendering="crispEdges"/>
<rect x="1123.5" y="144.5" width="13" height="6" fill="#FFFF00" stroke="#000" stroke-width="1" shape-rendering="crispEdges"/>
<rect x="440.5" y="528.5" width="13" height="6" fill="#FFFF00" stroke="#000" stroke-width="1" shape-rendering="crispEdges"/>
<rect x="555.5" y="528.5" width="13" height="6" fill="#FFFF00" stroke="#000" stroke-width="1" shape-rendering="crispEdges"/>
<rect x="600.5" y="528.5" width="13" height="6" fill="#FFFF00" stroke="#000" stroke-width="1" shape-rendering="crispEdges"/>
<rect x="892.5" y="528.5" width="13" height="6" fill="#FFFF00" stroke="#000" stroke-width="1" shape-rendering="crispEdges"/>
<rect x="954.5" y="528.5" width="13" height="6" fill="#FFFF00" stroke="#000" stroke-width="1" shape-rendering="crispEdges"/>
<rect x="1034.5" y="528.5" width="13" height="6" fill="#FFFF00" stroke="#000" stroke-width="1" shape-rendering="crispEdges"/>
<rect x="1043.5" y="528.5" width="13" height="6" fill="#FFFF00" stroke="#000" stroke-width="1" shape-rendering="crispEdges"/>
<rect x="1193.5" y="528.5" width="13" height="6" fill="#FFFF00" stroke="#000" stroke-width="1" shape-rendering="crispEdges"/>
<rect x="1220.5" y="528.5" width="13" height="6" fill="#FFFF00" stroke="#000" stroke-width="1" shape-rendering="crispEdges"/>
<g shape-rendering="crispEdges">
<rect x="366" y="444" width="2" height="33" fill="#FF0000" />
<rect x="368" y="452" width="4" height="2" fill="#FF0000" />
<rect x="375" y="439" width="2" height="29" fill="#0000FF" />
<rect x="377" y="444" width="4" height="2" fill="#0000FF" />
<rect x="384" y="439" width="2" height="14" fill="#FF0000" />
<rect x="386" y="445" width="4" height="2" fill="#FF0000" />
<rect x="393" y="442" width="2" height="17" fill="#FF0000" />
<rect x="395" y="448" width="4" height="2" fill="#FF0000" />
<rect x="402" y="436" width="2" height="19" fill="#0000FF" />
<rect x="404" y="446" width="4" height="2" fill="#0000FF" />
<rect x="411" y="440" width="2" height="28" fill="#FF0000" />
<rect x="413" y="462" width="4" height="2" fill="#FF0000" />
<rect x="420" y="455" width="2" height="17" fill="#000000" />
<rect x="422" y="462" width="4" height="2" fill="#000000" />
<rect x="428" y="452" width="2" height="29" fill="#0000FF" />
<rect x="430" y="459" width="4" height="2" fill="#0000FF" />
<rect x="437" y="450" width="2" height="19" fill="#0000FF" />
<rect x="439" y="457" width="4" height="2" fill="#0000FF" />
<rect x="446" y="452" width="2" height="16" fill="#FF0000" />
<rect x="448" y="459" width="4" height="2" fill="#FF0000" />
<rect x="455" y="429" width="2" height="42" fill="#0000FF" />
<rect x="457" y="433" width="4" height="2" fill="#0000FF" />
<rect x="464" y="434" width="2" height="25" fill="#FF0000" />
<rect x="466" y="441" width="4" height="2" fill="#FF0000" />
<rect x="473" y="427" width="2" height="29" fill="#000000" />
<rect x="475" y="441" width="4" height="2" fill="#000000" />
<rect x="482" y="437" width="2" height="58" fill="#FF0000" />
<rect x="484" y="483" width="4" height="2" fill="#FF0000" />
<rect x="490" y="458" width="2" height="45" fill="#0000FF" />
<rect x="492" y="462" width="4" height="2" fill="#0000FF" />
<rect x="499" y="434" width="2" height="37" fill="#0000FF" />
<rect x="501" y="448" width="4" height="2" fill="#0000FF" />
<rect x="508" y="418" width="2" height="45" fill="#0000FF" />
<rect x="510" y="438" width="4" height="2" fill="#0000FF" />
<rect x="517" y="439" width="2" height="50" fill="#FF0000" />
<rect x="519" y="470" width="4" height="2" fill="#FF0000" />
<rect x="526" y="266" width="2" height="234" fill="#0000FF" />
<rect x="528" y="281" width="4" height="2" fill="#0000FF" />
<rect x="535" y="281" width="2" height="67" fill="#FF0000" />
<rect x="537" y="333" width="4" height="2" fill="#FF0000" />
<rect x="544" y="302" width="2" height="48" fill="#0000FF" />
<rect x="546" y="325" width="4" height="2" fill="#0000FF" />
<rect x="552" y="307" width="2" height="38" fill="#0000FF" />
<rect x="554" y="312" width="4" height="2" fill="#0000FF" />
<rect x="561" y="310" width="2" height="32" fill="#FF0000" />
<rect x="563" y="330" width="4" height="2" fill="#FF0000" />
<rect x="570" y="318" width="2" height="27" fill="#0000FF" />
<rect x="572" y="319" width="4" height="2" fill="#0000FF" />
<rect x="579" y="294" width="2" height="33" fill="#0000FF" />
<rect x="581" y="296" width="4" height="2" fill="#0000FF" />
<rect x="588" y="273" width="2" height="33" fill="#0000FF" />
<rect x="590" y="291" width="4" height="2" fill="#0000FF" />
<rect x="597" y="273" width="2" height="28" fill="#0000FF" />
<rect x="599" y="280" width="4" height="2" fill="#0000FF" />
<rect x="606" y="274" width="2" height="29" fill="#FF0000" />
<rect x="608" y="289" width="4" height="2" fill="#FF0000" />
<rect x="615" y="282" width="2" height="26" fill="#FF0000" />
<rect x="617" y="296" width="4" height="2" fill="#FF0000" />
<rect x="623" y="281" width="2" height="27" fill="#0000FF" />
<rect x="625" y="293" width="4" height="2" fill="#0000FF" />
<rect x="632" y="284" width="2" height="27" fill="#FF0000" />
<rect x="634" y="301" width="4" height="2" fill="#FF0000" />
<rect x="641" y="295" width="2" height="18" fill="#000000" />
<rect x="643" y="301" width="4" height="2" fill="#000000" />
<rect x="650" y="294" width="2" height="17" fill="#0000FF" />
<rect x="652" y="296" width="4" height="2" fill="#0000FF" />
<rect x="659" y="294" width="2" height="15" fill="#FF0000" />
<rect x="661" y="299" width="4" height="2" fill="#FF0000" />
<rect x="668" y="284" width="2" height="22" fill="#0000FF" />
<rect x="670" y="289" width="4" height="2" fill="#0000FF" />
<rect x="677" y="284" width="2" height="25" fill="#FF0000" />
<rect x="679" y="301" width="4" height="2" fill="#FF0000" />
<rect x="685" y="282" width="2" height="26" fill="#0000FF" />
<rect x="687" y="293" width="4" height="2" fill="#0000FF" />
<rect x="694" y="289" width="2" height="24" fill="#FF0000" />
<rect x="696" y="293" width="4" height="2" fill="#FF0000" />
<rect x="703" y="281" width="2" height="20" fill="#0000FF" />
<rect x="705" y="293" width="4" height="2" fill="#0000FF" />
<rect x="712" y="264" width="2" height="36" fill="#0000FF" />
<rect x="714" y="286" width="4" height="2" fill="#0000FF" />
<rect x="721" y="258" width="2" height="38" fill="#0000FF" />
<rect x="723" y="273" width="4" height="2" fill="#0000FF" />
<rect x="730" y="264" width="2" height="31" fill="#FF0000" />
<rect x="732" y="281" width="4" height="2" fill="#FF0000" />
<rect x="739" y="224" width="2" height="102" fill="#FF0000" />
<rect x="741" y="298" width="4" height="2" fill="#FF0000" />
<rect x="747" y="214" width="2" height="94" fill="#0000FF" />
<rect x="749" y="224" width="4" height="2" fill="#0000FF" />
<rect x="756" y="215" width="2" height="50" fill="#FF0000" />
<rect x="758" y="242" width="4" height="2" fill="#FF0000" />
<rect x="765" y="240" width="2" height="58" fill="#FF0000" />
<rect x="767" y="254" width="4" height="2" fill="#FF0000" />
<rect x="774" y="246" width="2" height="38" fill="#FF0000" />
<rect x="776" y="265" width="4" height="2" fill="#FF0000" />
<rect x="783" y="237" width="2" height="37" fill="#0000FF" />
<rect x="785" y="245" width="4" height="2" fill="#0000FF" />
<rect x="792" y="235" width="2" height="24" fill="#FF0000" />
<rect x="794" y="250" width="4" height="2" fill="#FF0000" />
<rect x="801" y="240" width="2" height="19" fill="#FF0000" />
<rect x="803" y="251" width="4" height="2" fill="#FF0000" />
<rect x="810" y="242" width="2" height="23" fill="#0000FF" />
<rect x="812" y="244" width="4" height="2" fill="#0000FF" />
<rect x="818" y="248" width="2" height="12" fill="#FF0000" />
<rect x="820" y="250" width="4" height="2" fill="#FF0000" />
<rect x="827" y="244" width="2" height="18" fill="#0000FF" />
<rect x="829" y="244" width="4" height="2" fill="#0000FF" />
<rect x="836" y="232" width="2" height="24" fill="#0000FF" />
<rect x="838" y="241" width="4" height="2" fill="#0000FF" />
<rect x="845" y="237" width="2" height="29" fill="#FF0000" />
<rect x="847" y="256" width="4" height="2" fill="#FF0000" />
<rect x="854" y="250" width="2" height="12" fill="#FF0000" />
<rect x="856" y="258" width="4" height="2" fill="#FF0000" />
<rect x="863" y="232" width="2" height="28" fill="#0000FF" />
<rect x="865" y="237" width="4" height="2" fill="#0000FF" />
<rect x="872" y="228" width="2" height="23" fill="#000000" />
<rect x="874" y="237" width="4" height="2" fill="#000000" />
<rect x="880" y="230" width="2" height="24" fill="#FF0000" />
<rect x="882" y="244" width="4" height="2" fill="#FF0000" />
<rect x="889" y="237" width="2" height="38" fill="#FF0000" />
<rect x="891" y="270" width="4" height="2" fill="#FF0000" />
<rect x="898" y="259" width="2" height="34" fill="#0000FF" />
<rect x="900" y="262" width="4" height="2" fill="#0000FF" />
<rect x="907" y="251" width="2" height="29" fill="#FF0000" />
<rect x="909" y="271" width="4" height="2" fill="#FF0000" />
<rect x="916" y="257" width="2" height="20" fill="#0000FF" />
<rect x="918" y="263" width="4" height="2" fill="#0000FF" />
<rect x="925" y="261" width="2" height="21" fill="#FF0000" />
<rect x="927" y="267" width="4" height="2" fill="#FF0000" />
<rect x="934" y="254" width="2" height="24" fill="#0000FF" />
<rect x="936" y="255" width="4" height="2" fill="#0000FF" />
<rect x="942" y="259" width="2" height="23" fill="#FF0000" />
<rect x="944" y="260" width="4" height="2" fill="#FF0000" />
<rect x="951" y="225" width="2" height="53" fill="#FF0000" />
<rect x="953" y="267" width="4" height="2" fill="#FF0000" />
<rect x="960" y="245" width="2" height="61" fill="#0000FF" />
<rect x="962" y="249" width="4" height="2" fill="#0000FF" />
<rect x="969" y="175" width="2" height="80" fill="#0000FF" />
<rect x="971" y="182" width="4" height="2" fill="#0000FF" />
<rect x="978" y="180" width="2" height="32" fill="#FF0000" />
<rect x="980" y="189" width="4" height="2" fill="#FF0000" />
<rect x="987" y="167" width="2" height="38" fill="#0000FF" />
<rect x="989" y="175" width="4" height="2" fill="#0000FF" />
<rect x="996" y="168" width="2" height="40" fill="#FF0000" />
<rect x="998" y="192" width="4" height="2" fill="#FF0000" />
<rect x="1004" y="178" width="2" height="50" fill="#FF0000" />
<rect x="1006" y="219" width="4" height="2" fill="#FF0000" />
<rect x="1013" y="204" width="2" height="43" fill="#FF0000" />
<rect x="1015" y="221" width="4" height="2" fill="#FF0000" />
<rect x="1022" y="202" width="2" height="34" fill="#0000FF" />
<rect x="1024" y="203" width="4" height="2" fill="#0000FF" />
<rect x="1031" y="202" width="2" height="74" fill="#FF0000" />
<rect x="1033" y="267" width="4" height="2" fill="#FF0000" />
<rect x="1040" y="251" width="2" height="42" fill="#FF0000" />
<rect x="1042" y="283" width="4" height="2" fill="#FF0000" />
<rect x="1049" y="273" width="2" height="30" fill="#FF0000" />
<rect x="1051" y="291" width="4" height="2" fill="#FF0000" />
<rect x="1058" y="271" width="2" height="30" fill="#0000FF" />
<rect x="1060" y="280" width="4" height="2" fill="#0000FF" />
<rect x="1067" y="264" width="2" height="24" fill="#0000FF" />
<rect x="1069" y="270" width="4" height="2" fill="#0000FF" />
<rect x="1075" y="264" width="2" height="21" fill="#FF0000" />
<rect x="1077" y="278" width="4" height="2" fill="#FF0000" />
<rect x="1084" y="266" width="2" height="22" fill="#0000FF" />
<rect x="1086" y="276" width="4" height="2" fill="#0000FF" />
<rect x="1093" y="273" width="2" height="27" fill="#FF0000" />
<rect x="1095" y="288" width="4" height="2" fill="#FF0000" />
<rect x="1102" y="268" width="2" height="27" fill="#0000FF" />
<rect x="1104" y="280" width="4" height="2" fill="#0000FF" />
<rect x="1111" y="277" width="2" height="27" fill="#FF0000" />
<rect x="1113" y="286" width="4" height="2" fill="#FF0000" />
<rect x="1120" y="264" width="2" height="36" fill="#0000FF" />
<rect x="1122" y="265" width="4" height="2" fill="#0000FF" />
<rect x="1129" y="254" width="2" height="24" fill="#0000FF" />
<rect x="1131" y="254" width="4" height="2" fill="#0000FF" />
<rect x="1137" y="242" width="2" height="20" fill="#0000FF" />
<rect x="1139" y="243" width="4" height="2" fill="#0000FF" />
<rect x="1146" y="243" width="2" height="22" fill="#FF0000" />
<rect x="1148" y="255" width="4" height="2" fill="#FF0000" />
<rect x="1155" y="256" width="2" height="32" fill="#FF0000" />
<rect x="1157" y="273" width="4" height="2" fill="#FF0000" />
<rect x="1164" y="253" width="2" height="76" fill="#FF0000" />
<rect x="1166" y="304" width="4" height="2" fill="#FF0000" />
<rect x="1173" y="294" width="2" height="64" fill="#FF0000" />
<rect x="1175" y="340" width="4" height="2" fill="#FF0000" />
<rect x="1182" y="317" width="2" height="43" fill="#FF0000" />
<rect x="1184" y="343" width="4" height="2" fill="#FF0000" />
<rect x="1191" y="321" width="2" height="47" fill="#FF0000" />
<rect x="1193" y="348" width="4" height="2" fill="#FF0000" />
<rect x="1199" y="338" width="2" height="38" fill="#0000FF" />
<rect x="1201" y="343" width="4" height="2" fill="#0000FF" />
<rect x="1208" y="344" width="2" height="57" fill="#FF0000" />
<rect x="1210" y="392" width="4" height="2" fill="#FF0000" />
<rect x="1217" y="365" width="2" height="49" fill="#0000FF" />
<rect x="1219" y="391" width="4" height="2" fill="#0000FF" />
<rect x="1226" y="380" width="2" height="58" fill="#800080" />
<rect x="1228" y="431" width="4" height="2" fill="#800080" />
</g>
<g shape-rendering="crispEdges">
<rect x="400" y="272" width="863" height="1" fill="#800080" />
<rect x="359" y="432" width="859" height="1" fill="#800080" />
<rect x="1237" y="432" width="29" height="1" fill="#800080" />
<rect x="1218" y="123" width="1" height="234" fill="#800080" />
<rect x="1218" y="421" width="1" height="121" fill="#800080" />
<rect x="1218" y="548" width="1" height="42" fill="#800080" />
</g>
<polygon points="669.50,333.00 662.30,340.00 676.70,340.00" fill="#3FB4F0" stroke="#909090" stroke-width="1" />
<polygon points="686.50,335.00 679.30,342.00 693.70,342.00" fill="#3FB4F0" stroke="#909090" stroke-width="1" />
<polygon points="748.50,335.00 741.30,342.00 755.70,342.00" fill="#3FB4F0" stroke="#909090" stroke-width="1" />
<polygon points="784.50,299.00 777.30,306.00 791.70,306.00" fill="#3FB4F0" stroke="#909090" stroke-width="1" />
<polygon points="1023.50,262.50 1016.30,269.50 1030.70,269.50" fill="#3FB4F0" stroke="#909090" stroke-width="1" />
<polygon points="456.50,497.00 449.30,504.00 463.70,504.00" fill="#3FB4F0" stroke="#909090" stroke-width="1" />
<polygon points="527.50,526.50 520.30,533.50 534.70,533.50" fill="#3FB4F0" stroke="#909090" stroke-width="1" />
<polygon points="1034.00,217.50 1049.00,217.50 1041.50,225.00" fill="#3FB4F0" stroke="#909090" stroke-width="1" />
<polygon points="476.00,403.00 491.00,403.00 483.50,410.50" fill="#3FB4F0" stroke="#909090" stroke-width="1" />
<polygon points="511.00,405.00 526.00,405.00 518.50,412.50" fill="#3FB4F0" stroke="#909090" stroke-width="1" />
<polygon points="562.50,358.00 555.30,365.00 569.70,365.00" fill="#33DD33" stroke="#909090" stroke-width="1" />
<polygon points="961.50,322.50 954.30,329.50 968.70,329.50" fill="#33DD33" stroke="#909090" stroke-width="1" />
<polygon points="1050.50,319.50 1043.30,326.50 1057.70,326.50" fill="#33DD33" stroke="#909090" stroke-width="1" />
<polygon points="1165.50,345.50 1158.30,352.50 1172.70,352.50" fill="#33DD33" stroke="#909090" stroke-width="1" />
<polygon points="1174.50,374.50 1167.30,381.50 1181.70,381.50" fill="#33DD33" stroke="#909090" stroke-width="1" />
<polygon points="1183.50,376.50 1176.30,383.50 1190.70,383.50" fill="#33DD33" stroke="#909090" stroke-width="1" />
<polygon points="447.50,489.00 440.30,496.00 454.70,496.00" fill="#33DD33" stroke="#909090" stroke-width="1" />
<polygon points="740.50,343.00 733.30,350.00 747.70,350.00" fill="#00A400" stroke="#000" stroke-width="1" />
<polygon points="1192.50,384.50 1185.30,391.50 1199.70,391.50" fill="#00A400" stroke="#000" stroke-width="1" />
<polygon points="741.00,190.50 756.00,190.50 748.50,198.00" fill="#B80000" stroke="#000" stroke-width="1" />
<polygon points="679.00,258.50 694.00,258.50 686.50,266.00" fill="#B80000" stroke="#000" stroke-width="1" />
<polygon points="963.00,151.50 978.00,151.50 970.50,159.00" fill="#B80000" stroke="#000" stroke-width="1" />
<polygon points="715.00,235.00 730.00,235.00 722.50,242.50" fill="#E82828" stroke="#909090" stroke-width="1" />
<polygon points="373.45,533.30 376.50,530.25 379.55,533.30 376.50,536.35" fill="#00E800" stroke="#000" stroke-width="1" />
<polygon points="382.45,525.40 385.50,522.35 388.55,525.40 385.50,528.45" fill="#00E800" stroke="#000" stroke-width="1" />
<polygon points="391.45,517.20 394.50,514.15 397.55,517.20 394.50,520.25" fill="#00E800" stroke="#000" stroke-width="1" />
<polygon points="400.45,509.60 403.50,506.55 406.55,509.60 403.50,512.65" fill="#00E800" stroke="#000" stroke-width="1" />
<polygon points="409.45,499.60 412.50,496.55 415.55,499.60 412.50,502.65" fill="#00E800" stroke="#000" stroke-width="1" />
<polygon points="418.45,491.20 421.50,488.15 424.55,491.20 421.50,494.25" fill="#00E800" stroke="#000" stroke-width="1" />
<polygon points="426.45,484.60 429.50,481.55 432.55,484.60 429.50,487.65" fill="#00E800" stroke="#000" stroke-width="1" />
<polygon points="435.45,476.20 438.50,473.15 441.55,476.20 438.50,479.25" fill="#00E800" stroke="#000" stroke-width="1" />
<polygon points="444.45,470.30 447.50,467.25 450.55,470.30 447.50,473.35" fill="#00E800" stroke="#000" stroke-width="1" />
<polygon points="453.45,463.40 456.50,460.35 459.55,463.40 456.50,466.45" fill="#00E800" stroke="#000" stroke-width="1" />
<polygon points="462.45,460.40 465.50,457.35 468.55,460.40 465.50,463.45" fill="#00E800" stroke="#000" stroke-width="1" />
<polygon points="471.45,457.70 474.50,454.65 477.55,457.70 474.50,460.75" fill="#00E800" stroke="#000" stroke-width="1" />
<polygon points="480.45,453.60 483.50,450.55 486.55,453.60 483.50,456.65" fill="#FFFFFF" stroke="#000" stroke-width="1" />
<polygon points="488.45,453.60 491.50,450.55 494.55,453.60 491.50,456.65" fill="#FFFFFF" stroke="#000" stroke-width="1" />
<polygon points="497.45,453.60 500.50,450.55 503.55,453.60 500.50,456.65" fill="#FFFFFF" stroke="#000" stroke-width="1" />
<polygon points="506.45,453.60 509.50,450.55 512.55,453.60 509.50,456.65" fill="#FFFFFF" stroke="#000" stroke-width="1" />
<polygon points="515.45,455.40 518.50,452.35 521.55,455.40 518.50,458.45" fill="#FF0000" stroke="#000" stroke-width="1" />
<polygon points="524.45,450.20 527.50,447.15 530.55,450.20 527.50,453.25" fill="#00E800" stroke="#000" stroke-width="1" />
<polygon points="533.45,444.30 536.50,441.25 539.55,444.30 536.50,447.35" fill="#00E800" stroke="#000" stroke-width="1" />
<polygon points="542.45,437.80 545.50,434.75 548.55,437.80 545.50,440.85" fill="#00E800" stroke="#000" stroke-width="1" />
<polygon points="550.45,431.90 553.50,428.85 556.55,431.90 553.50,434.95" fill="#00E800" stroke="#000" stroke-width="1" />
<polygon points="559.45,424.50 562.50,421.45 565.55,424.50 562.50,427.55" fill="#00E800" stroke="#000" stroke-width="1" />
<polygon points="568.45,419.30 571.50,416.25 574.55,419.30 571.50,422.35" fill="#00E800" stroke="#000" stroke-width="1" />
<polygon points="577.45,410.50 580.50,407.45 583.55,410.50 580.50,413.55" fill="#00E800" stroke="#000" stroke-width="1" />
<polygon points="586.45,403.00 589.50,399.95 592.55,403.00 589.50,406.05" fill="#00E800" stroke="#000" stroke-width="1" />
<polygon points="595.45,395.50 598.50,392.45 601.55,395.50 598.50,398.55" fill="#00E800" stroke="#000" stroke-width="1" />
<polygon points="604.45,385.70 607.50,382.65 610.55,385.70 607.50,388.75" fill="#00E800" stroke="#000" stroke-width="1" />
<polygon points="613.45,377.20 616.50,374.15 619.55,377.20 616.50,380.25" fill="#00E800" stroke="#000" stroke-width="1" />
<polygon points="621.45,369.60 624.50,366.55 627.55,369.60 624.50,372.65" fill="#00E800" stroke="#000" stroke-width="1" />
<polygon points="630.45,362.20 633.50,359.15 636.55,362.20 633.50,365.25" fill="#00E800" stroke="#000" stroke-width="1" />
<polygon points="639.45,354.40 642.50,351.35 645.55,354.40 642.50,357.45" fill="#00E800" stroke="#000" stroke-width="1" />
<polygon points="648.45,347.30 651.50,344.25 654.55,347.30 651.50,350.35" fill="#00E800" stroke="#000" stroke-width="1" />
<polygon points="657.45,339.40 660.50,336.35 663.55,339.40 660.50,342.45" fill="#00E800" stroke="#000" stroke-width="1" />
<polygon points="666.45,330.10 669.50,327.05 672.55,330.10 669.50,333.15" fill="#00E800" stroke="#000" stroke-width="1" />
<polygon points="675.45,323.60 678.50,320.55 681.55,323.60 678.50,326.65" fill="#00E800" stroke="#000" stroke-width="1" />
<polygon points="683.45,315.20 686.50,312.15 689.55,315.20 686.50,318.25" fill="#00E800" stroke="#000" stroke-width="1" />
<polygon points="692.45,307.60 695.50,304.55 698.55,307.60 695.50,310.65" fill="#00E800" stroke="#000" stroke-width="1" />
<polygon points="701.45,303.40 704.50,300.35 707.55,303.40 704.50,306.45" fill="#00E800" stroke="#000" stroke-width="1" />
<polygon points="710.45,302.40 713.50,299.35 716.55,302.40 713.50,305.45" fill="#00E800" stroke="#000" stroke-width="1" />
<polygon points="719.45,300.20 722.50,297.15 725.55,300.20 722.50,303.25" fill="#00E800" stroke="#000" stroke-width="1" />
<polygon points="728.45,297.60 731.50,294.55 734.55,297.60 731.50,300.65" fill="#00E800" stroke="#000" stroke-width="1" />
<polygon points="737.45,295.00 740.50,291.95 743.55,295.00 740.50,298.05" fill="#FFFFFF" stroke="#000" stroke-width="1" />
<polygon points="745.45,292.60 748.50,289.55 751.55,292.60 748.50,295.65" fill="#00E800" stroke="#000" stroke-width="1" />
<polygon points="754.45,289.30 757.50,286.25 760.55,289.30 757.50,292.35" fill="#00E800" stroke="#000" stroke-width="1" />
<polygon points="763.45,287.40 766.50,284.35 769.55,287.40 766.50,290.45" fill="#00E800" stroke="#000" stroke-width="1" />
<polygon points="772.45,286.50 775.50,283.45 778.55,286.50 775.50,289.55" fill="#00E800" stroke="#000" stroke-width="1" />
<polygon points="781.45,284.30 784.50,281.25 787.55,284.30 784.50,287.35" fill="#00E800" stroke="#000" stroke-width="1" />
<polygon points="790.45,282.00 793.50,278.95 796.55,282.00 793.50,285.05" fill="#00E800" stroke="#000" stroke-width="1" />
<polygon points="799.45,279.10 802.50,276.05 805.55,279.10 802.50,282.15" fill="#00E800" stroke="#000" stroke-width="1" />
<polygon points="808.45,277.40 811.50,274.35 814.55,277.40 811.50,280.45" fill="#00E800" stroke="#000" stroke-width="1" />
<polygon points="816.45,274.50 819.50,271.45 822.55,274.50 819.50,277.55" fill="#00E800" stroke="#000" stroke-width="1" />
<polygon points="825.45,272.00 828.50,268.95 831.55,272.00 828.50,275.05" fill="#00E800" stroke="#000" stroke-width="1" />
<polygon points="834.45,269.30 837.50,266.25 840.55,269.30 837.50,272.35" fill="#00E800" stroke="#000" stroke-width="1" />
<polygon points="843.45,268.00 846.50,264.95 849.55,268.00 846.50,271.05" fill="#00E800" stroke="#000" stroke-width="1" />
<polygon points="852.45,264.30 855.50,261.25 858.55,264.30 855.50,267.35" fill="#00E800" stroke="#000" stroke-width="1" />
<polygon points="861.45,263.30 864.50,260.25 867.55,263.30 864.50,266.35" fill="#00E800" stroke="#000" stroke-width="1" />
<polygon points="870.45,259.30 873.50,256.25 876.55,259.30 873.50,262.35" fill="#00E800" stroke="#000" stroke-width="1" />
<polygon points="878.45,258.00 881.50,254.95 884.55,258.00 881.50,261.05" fill="#00E800" stroke="#000" stroke-width="1" />
<polygon points="887.45,256.50 890.50,253.45 893.55,256.50 890.50,259.55" fill="#FFFFFF" stroke="#000" stroke-width="1" />
<polygon points="896.45,256.50 899.50,253.45 902.55,256.50 899.50,259.55" fill="#FFFFFF" stroke="#000" stroke-width="1" />
<polygon points="905.45,255.50 908.50,252.45 911.55,255.50 908.50,258.55" fill="#FFFFFF" stroke="#000" stroke-width="1" />
<polygon points="914.45,255.50 917.50,252.45 920.55,255.50 917.50,258.55" fill="#FFFFFF" stroke="#000" stroke-width="1" />
<polygon points="923.45,255.50 926.50,252.45 929.55,255.50 926.50,258.55" fill="#FFFFFF" stroke="#000" stroke-width="1" />
<polygon points="932.45,256.50 935.50,253.45 938.55,256.50 935.50,259.55" fill="#FFFFFF" stroke="#000" stroke-width="1" />
<polygon points="940.45,256.50 943.50,253.45 946.55,256.50 943.50,259.55" fill="#FFFFFF" stroke="#000" stroke-width="1" />
<polygon points="949.45,256.50 952.50,253.45 955.55,256.50 952.50,259.55" fill="#FFFFFF" stroke="#000" stroke-width="1" />
<polygon points="958.45,256.50 961.50,253.45 964.55,256.50 961.50,259.55" fill="#FFFFFF" stroke="#000" stroke-width="1" />
<polygon points="967.45,255.50 970.50,252.45 973.55,255.50 970.50,258.55" fill="#00E800" stroke="#000" stroke-width="1" />
<polygon points="976.45,251.50 979.50,248.45 982.55,251.50 979.50,254.55" fill="#00E800" stroke="#000" stroke-width="1" />
<polygon points="985.45,248.10 988.50,245.05 991.55,248.10 988.50,251.15" fill="#00E800" stroke="#000" stroke-width="1" />
<polygon points="994.45,245.30 997.50,242.25 1000.55,245.30 997.50,248.35" fill="#00E800" stroke="#000" stroke-width="1" />
<polygon points="1002.45,243.30 1005.50,240.25 1008.55,243.30 1005.50,246.35" fill="#00E800" stroke="#000" stroke-width="1" />
<polygon points="1011.45,242.20 1014.50,239.15 1017.55,242.20 1014.50,245.25" fill="#00E800" stroke="#000" stroke-width="1" />
<polygon points="1020.45,240.30 1023.50,237.25 1026.55,240.30 1023.50,243.35" fill="#00E800" stroke="#000" stroke-width="1" />
<polygon points="1029.45,240.70 1032.50,237.65 1035.55,240.70 1032.50,243.75" fill="#FFFFFF" stroke="#000" stroke-width="1" />
<polygon points="1038.45,242.30 1041.50,239.25 1044.55,242.30 1041.50,245.35" fill="#FF0000" stroke="#000" stroke-width="1" />
<polygon points="1047.45,243.40 1050.50,240.35 1053.55,243.40 1050.50,246.45" fill="#FF0000" stroke="#000" stroke-width="1" />
<polygon points="1056.45,246.30 1059.50,243.25 1062.55,246.30 1059.50,249.35" fill="#FF0000" stroke="#000" stroke-width="1" />
<polygon points="1065.45,246.50 1068.50,243.45 1071.55,246.50 1068.50,249.55" fill="#FFFFFF" stroke="#000" stroke-width="1" />
<polygon points="1073.45,246.50 1076.50,243.45 1079.55,246.50 1076.50,249.55" fill="#FFFFFF" stroke="#000" stroke-width="1" />
<polygon points="1082.45,246.50 1085.50,243.45 1088.55,246.50 1085.50,249.55" fill="#FFFFFF" stroke="#000" stroke-width="1" />
<polygon points="1091.45,248.50 1094.50,245.45 1097.55,248.50 1094.50,251.55" fill="#FF0000" stroke="#000" stroke-width="1" />
<polygon points="1100.45,248.50 1103.50,245.45 1106.55,248.50 1103.50,251.55" fill="#FFFFFF" stroke="#000" stroke-width="1" />
<polygon points="1109.45,250.40 1112.50,247.35 1115.55,250.40 1112.50,253.45" fill="#FF0000" stroke="#000" stroke-width="1" />
<polygon points="1118.45,251.30 1121.50,248.25 1124.55,251.30 1121.50,254.35" fill="#FF0000" stroke="#000" stroke-width="1" />
<polygon points="1127.45,251.30 1130.50,248.25 1133.55,251.30 1130.50,254.35" fill="#FFFFFF" stroke="#000" stroke-width="1" />
<polygon points="1135.45,250.40 1138.50,247.35 1141.55,250.40 1138.50,253.45" fill="#00E800" stroke="#000" stroke-width="1" />
<polygon points="1144.45,253.50 1147.50,250.45 1150.55,253.50 1147.50,256.55" fill="#FF0000" stroke="#000" stroke-width="1" />
<polygon points="1153.45,256.30 1156.50,253.25 1159.55,256.30 1156.50,259.35" fill="#FF0000" stroke="#000" stroke-width="1" />
<polygon points="1162.45,263.60 1165.50,260.55 1168.55,263.60 1165.50,266.65" fill="#FF0000" stroke="#000" stroke-width="1" />
<polygon points="1171.45,269.50 1174.50,266.45 1177.55,269.50 1174.50,272.55" fill="#FF0000" stroke="#000" stroke-width="1" />
<polygon points="1180.45,276.40 1183.50,273.35 1186.55,276.40 1183.50,279.45" fill="#FF0000" stroke="#000" stroke-width="1" />
<polygon points="1189.45,282.90 1192.50,279.85 1195.55,282.90 1192.50,285.95" fill="#FF0000" stroke="#000" stroke-width="1" />
<polygon points="1197.45,289.30 1200.50,286.25 1203.55,289.30 1200.50,292.35" fill="#FF0000" stroke="#000" stroke-width="1" />
<polygon points="1206.45,295.30 1209.50,292.25 1212.55,295.30 1209.50,298.35" fill="#FF0000" stroke="#000" stroke-width="1" />
<polygon points="1215.45,300.50 1218.50,297.45 1221.55,300.50 1218.50,303.55" fill="#FF0000" stroke="#000" stroke-width="1" />
<polygon points="1224.45,307.30 1227.50,304.25 1230.55,307.30 1227.50,310.35" fill="#FF0000" stroke="#000" stroke-width="1" />
<clipPath id="cpm"><rect x="359" y="123" width="904" height="419"/></clipPath>
<polygon points="364.45,541.70 367.50,538.65 370.55,541.70 367.50,544.75" fill="#00E800" stroke="#000" stroke-width="1" clip-path="url(#cpm)"/>
<rect x="1266.5" y="423.5" width="40" height="18" fill="#FFFFFF" stroke="#800080" stroke-width="1" shape-rendering="crispEdges"/>
<text x="1270.8" y="437" font-size="12.5" fill="#800080" font-weight="normal" text-anchor="start" textLength="32.2" lengthAdjust="spacingAndGlyphs" >1.3874</text>
<rect x="360.5" y="124.5" width="101" height="17" fill="#FFFFFF" stroke="#000" stroke-width="1" shape-rendering="crispEdges"/>
<text x="362.5" y="137" font-size="11.5" fill="#000" font-weight="normal" text-anchor="start" textLength="71" lengthAdjust="spacingAndGlyphs" >EUR A0-FX,1H</text>
<text x="467.5" y="138.5" font-size="14" fill="#000" font-weight="bold" text-anchor="start" textLength="34" lengthAdjust="spacingAndGlyphs" >16:00</text>
<text x="515.5" y="138.5" font-size="14" fill="#000" font-weight="bold" text-anchor="start" textLength="66" lengthAdjust="spacingAndGlyphs" >08 Mar 11</text>
<text x="596.5" y="138.5" font-size="14" fill="#000" font-weight="normal" text-anchor="start" textLength="58.5" lengthAdjust="spacingAndGlyphs" >O 1.3897</text>
<text x="669.5" y="138.5" font-size="14" fill="#000" font-weight="bold" text-anchor="start" textLength="57.5" lengthAdjust="spacingAndGlyphs" >H 1.3914</text>
<text x="741.5" y="138.5" font-size="14" fill="#000" font-weight="bold" text-anchor="start" textLength="55.5" lengthAdjust="spacingAndGlyphs" >L 1.3885</text>
<rect x="811" y="125" width="67" height="18" fill="#0000FF" />
<text x="812.5" y="138.5" font-size="14" fill="#FFF" font-weight="bold" text-anchor="start" textLength="56.5" lengthAdjust="spacingAndGlyphs" >C 1.3899</text>
<text x="884" y="138.5" font-size="14" fill="#000" font-weight="bold" text-anchor="start" textLength="51" lengthAdjust="spacingAndGlyphs" >V 57820</text>
<rect x="1334" y="122" width="29" height="1" fill="#FFFFFF" />
<rect x="1334" y="122" width="1" height="555" fill="#FFFFFF" />
<rect x="1362" y="122" width="1" height="556" fill="#808080" />
<rect x="1334" y="677" width="29" height="1" fill="#808080" />
<rect x="1336" y="126" width="25" height="1" fill="#FFFFFF" />
<rect x="1336" y="127" width="25" height="1" fill="#FFFFFF" />
<rect x="1336" y="128" width="25" height="1" fill="#808080" />
<rect x="1360" y="126" width="1" height="3" fill="#808080" />
<rect x="1336" y="129" width="25" height="1" fill="#FFFFFF" />
<rect x="1336" y="130" width="25" height="1" fill="#FFFFFF" />
<rect x="1336" y="131" width="25" height="1" fill="#808080" />
<rect x="1360" y="129" width="1" height="3" fill="#808080" />
<rect x="1342" y="134" width="12" height="307" fill="#D4D0C8" />
<rect x="1342" y="134" width="11" height="1" fill="#808080" />
<rect x="1342" y="134" width="1" height="306" fill="#808080" />
<rect x="1353" y="134" width="1" height="307" fill="#FFFFFF" />
<rect x="1342" y="440" width="12" height="1" fill="#FFFFFF" />
<rect x="1343" y="135" width="10" height="211" fill="#FF0000" />
<rect x="1343" y="346" width="10" height="94" fill="#00FF00" />
<rect x="1340" y="285" width="15" height="5" fill="#D4D0C8" />
<rect x="1340" y="285" width="15" height="1" fill="#FFFFFF" />
<rect x="1340" y="285" width="1" height="5" fill="#FFFFFF" />
<rect x="1340" y="289" width="15" height="1" fill="#808080" />
<rect x="1354" y="285" width="1" height="5" fill="#808080" />
<rect x="1337" y="134" width="1" height="310" fill="#FFFFFF" />
<rect x="1338" y="134" width="1" height="310" fill="#B8B4AC" />
<rect x="1336" y="448" width="25" height="1" fill="#FFFFFF" />
<rect x="1336" y="449" width="25" height="1" fill="#FFFFFF" />
<rect x="1336" y="450" width="25" height="1" fill="#808080" />
<rect x="1360" y="448" width="1" height="3" fill="#808080" />
<rect x="1336" y="451" width="25" height="1" fill="#FFFFFF" />
<rect x="1336" y="452" width="25" height="1" fill="#FFFFFF" />
<rect x="1336" y="453" width="25" height="1" fill="#808080" />
<rect x="1360" y="451" width="1" height="3" fill="#808080" />
<rect x="1336" y="463" width="24" height="18" fill="#D4D0C8" />
<rect x="1336" y="463" width="23" height="1" fill="#FFFFFF" />
<rect x="1336" y="463" width="1" height="17" fill="#FFFFFF" />
<rect x="1336" y="480" width="24" height="1" fill="#404040" />
<rect x="1359" y="463" width="1" height="18" fill="#404040" />
<rect x="1337" y="479" width="22" height="1" fill="#808080" />
<rect x="1358" y="464" width="1" height="16" fill="#808080" />
<text x="1348" y="475.5" font-size="10" fill="#000" font-weight="normal" text-anchor="middle" >20</text>
<rect x="1336" y="482" width="24" height="18" fill="#D4D0C8" />
<rect x="1336" y="482" width="23" height="1" fill="#FFFFFF" />
<rect x="1336" y="482" width="1" height="17" fill="#FFFFFF" />
<rect x="1336" y="499" width="24" height="1" fill="#404040" />
<rect x="1359" y="482" width="1" height="18" fill="#404040" />
<rect x="1337" y="498" width="22" height="1" fill="#808080" />
<rect x="1358" y="483" width="1" height="16" fill="#808080" />
<text x="1348" y="494.5" font-size="10" fill="#000" font-weight="normal" text-anchor="middle" >30</text>
<rect x="1336" y="501" width="24" height="18" fill="#D4D0C8" />
<rect x="1336" y="501" width="23" height="1" fill="#FFFFFF" />
<rect x="1336" y="501" width="1" height="17" fill="#FFFFFF" />
<rect x="1336" y="518" width="24" height="1" fill="#404040" />
<rect x="1359" y="501" width="1" height="18" fill="#404040" />
<rect x="1337" y="517" width="22" height="1" fill="#808080" />
<rect x="1358" y="502" width="1" height="16" fill="#808080" />
<text x="1348" y="513.5" font-size="10" fill="#000" font-weight="normal" text-anchor="middle" >40</text>
<rect x="1336" y="520" width="24" height="18" fill="#D4D0C8" />
<rect x="1336" y="520" width="23" height="1" fill="#FFFFFF" />
<rect x="1336" y="520" width="1" height="17" fill="#FFFFFF" />
<rect x="1336" y="537" width="24" height="1" fill="#404040" />
<rect x="1359" y="520" width="1" height="18" fill="#404040" />
<rect x="1337" y="536" width="22" height="1" fill="#808080" />
<rect x="1358" y="521" width="1" height="16" fill="#808080" />
<text x="1348" y="532.5" font-size="10" fill="#000" font-weight="normal" text-anchor="middle" >50</text>
<rect x="1336" y="539" width="24" height="18" fill="#D4D0C8" />
<rect x="1336" y="539" width="23" height="1" fill="#FFFFFF" />
<rect x="1336" y="539" width="1" height="17" fill="#FFFFFF" />
<rect x="1336" y="556" width="24" height="1" fill="#404040" />
<rect x="1359" y="539" width="1" height="18" fill="#404040" />
<rect x="1337" y="555" width="22" height="1" fill="#808080" />
<rect x="1358" y="540" width="1" height="16" fill="#808080" />
<text x="1348" y="551.5" font-size="10" fill="#000" font-weight="normal" text-anchor="middle" >60</text>
<rect x="1336" y="558" width="24" height="18" fill="#D4D0C8" />
<rect x="1336" y="558" width="23" height="1" fill="#FFFFFF" />
<rect x="1336" y="558" width="1" height="17" fill="#FFFFFF" />
<rect x="1336" y="575" width="24" height="1" fill="#404040" />
<rect x="1359" y="558" width="1" height="18" fill="#404040" />
<rect x="1337" y="574" width="22" height="1" fill="#808080" />
<rect x="1358" y="559" width="1" height="16" fill="#808080" />
<text x="1348" y="570.5" font-size="10" fill="#000" font-weight="normal" text-anchor="middle" >70</text>
<rect x="1336" y="577" width="24" height="18" fill="#D4D0C8" />
<rect x="1336" y="577" width="23" height="1" fill="#FFFFFF" />
<rect x="1336" y="577" width="1" height="17" fill="#FFFFFF" />
<rect x="1336" y="594" width="24" height="1" fill="#404040" />
<rect x="1359" y="577" width="1" height="18" fill="#404040" />
<rect x="1337" y="593" width="22" height="1" fill="#808080" />
<rect x="1358" y="578" width="1" height="16" fill="#808080" />
<text x="1348" y="589.5" font-size="10" fill="#000" font-weight="normal" text-anchor="middle" >80</text>
<rect x="1336" y="596" width="24" height="18" fill="#D4D0C8" />
<rect x="1336" y="596" width="23" height="1" fill="#FFFFFF" />
<rect x="1336" y="596" width="1" height="17" fill="#FFFFFF" />
<rect x="1336" y="613" width="24" height="1" fill="#404040" />
<rect x="1359" y="596" width="1" height="18" fill="#404040" />
<rect x="1337" y="612" width="22" height="1" fill="#808080" />
<rect x="1358" y="597" width="1" height="16" fill="#808080" />
<text x="1348" y="608.5" font-size="10" fill="#000" font-weight="normal" text-anchor="middle" >90</text>
<rect x="1336" y="614" width="24" height="19" fill="url(#dith)" />
<rect x="1336" y="614" width="23" height="1" fill="#404040" />
<rect x="1336" y="614" width="1" height="18" fill="#404040" />
<rect x="1337" y="615" width="21" height="1" fill="#808080" />
<rect x="1337" y="615" width="1" height="16" fill="#808080" />
<rect x="1336" y="632" width="24" height="1" fill="#FFFFFF" />
<rect x="1359" y="614" width="1" height="19" fill="#FFFFFF" />
<text x="1348.5" y="628" font-size="10" fill="#000" font-weight="normal" text-anchor="middle" >100</text>
<rect x="1336" y="634" width="24" height="18" fill="#D4D0C8" />
<rect x="1336" y="634" width="23" height="1" fill="#FFFFFF" />
<rect x="1336" y="634" width="1" height="17" fill="#FFFFFF" />
<rect x="1336" y="651" width="24" height="1" fill="#404040" />
<rect x="1359" y="634" width="1" height="18" fill="#404040" />
<rect x="1337" y="650" width="22" height="1" fill="#808080" />
<rect x="1358" y="635" width="1" height="16" fill="#808080" />
<text x="1348" y="646.5" font-size="10" fill="#000" font-weight="normal" text-anchor="middle" >200</text>
<rect x="1336" y="651" width="25" height="25" fill="#D4D0C8" />
<rect x="1336" y="651" width="24" height="1" fill="#FFFFFF" />
<rect x="1336" y="651" width="1" height="24" fill="#FFFFFF" />
<rect x="1336" y="675" width="25" height="1" fill="#404040" />
<rect x="1360" y="651" width="1" height="25" fill="#404040" />
<rect x="1337" y="674" width="23" height="1" fill="#808080" />
<rect x="1359" y="652" width="1" height="23" fill="#808080" />
<circle cx="1346.5" cy="662" r="4.8" fill="#F4F4F4" stroke="#000" stroke-width="1.4"/>
<path d="M1343.8 662 h5.4 M1346.5 659.3 v5.4" stroke="#E00000" stroke-width="1.4"/>
<path d="M1350.5 666 L1356 671" stroke="#000" stroke-width="2.6"/>
<path d="M1350 665.2 L1352 667.2" stroke="#E8E000" stroke-width="1"/>
<rect x="358" y="692" width="970" height="16" fill="url(#dith)" />
<rect x="358" y="692" width="16" height="16" fill="#D4D0C8" />
<rect x="358" y="692" width="15" height="1" fill="#FFFFFF" />
<rect x="358" y="692" width="1" height="15" fill="#FFFFFF" />
<rect x="358" y="707" width="16" height="1" fill="#404040" />
<rect x="373" y="692" width="1" height="16" fill="#404040" />
<rect x="359" y="706" width="14" height="1" fill="#808080" />
<rect x="372" y="693" width="1" height="14" fill="#808080" />
<polygon points="368.00,696.00 368.00,704.00 363.50,700.00" fill="#000" />
<rect x="1294" y="692" width="16" height="16" fill="#D4D0C8" />
<rect x="1294" y="692" width="15" height="1" fill="#FFFFFF" />
<rect x="1294" y="692" width="1" height="15" fill="#FFFFFF" />
<rect x="1294" y="707" width="16" height="1" fill="#404040" />
<rect x="1309" y="692" width="1" height="16" fill="#404040" />
<rect x="1295" y="706" width="14" height="1" fill="#808080" />
<rect x="1308" y="693" width="1" height="14" fill="#808080" />
<rect x="1312" y="692" width="16" height="16" fill="#D4D0C8" />
<rect x="1312" y="692" width="15" height="1" fill="#FFFFFF" />
<rect x="1312" y="692" width="1" height="15" fill="#FFFFFF" />
<rect x="1312" y="707" width="16" height="1" fill="#404040" />
<rect x="1327" y="692" width="1" height="16" fill="#404040" />
<rect x="1313" y="706" width="14" height="1" fill="#808080" />
<rect x="1326" y="693" width="1" height="14" fill="#808080" />
<polygon points="1318.00,696.00 1318.00,704.00 1322.50,700.00" fill="#000" />
<rect x="3" y="713" width="1360" height="1" fill="#808080" />
<rect x="3" y="716" width="1358" height="1" fill="#FFFFFF" />
<rect x="1360" y="716" width="1" height="12" fill="#FFFFFF" />
<rect x="113" y="716" width="1" height="12" fill="#808080" />
<rect x="114" y="716" width="1" height="12" fill="#FFFFFF" />
<rect x="390" y="716" width="1" height="12" fill="#808080" />
<rect x="391" y="716" width="1" height="12" fill="#FFFFFF" />
<text x="6.5" y="731" font-size="12" fill="#008000" font-weight="normal" text-anchor="start" textLength="99.5" lengthAdjust="spacingAndGlyphs" >ESIGNAL, 1 Symbols</text>
<text x="987.3" y="731.5" font-size="12" fill="#0000E0" font-weight="normal" text-anchor="start" textLength="17.5" lengthAdjust="spacingAndGlyphs" >Bar:</text>
<text x="1010.5" y="731.5" font-size="12" fill="#0000E0" font-weight="bold" text-anchor="start" textLength="15.5" lengthAdjust="spacingAndGlyphs" >Up</text>
<text x="1041.7" y="731.5" font-size="12" fill="#0000E0" font-weight="normal" text-anchor="start" textLength="18" lengthAdjust="spacingAndGlyphs" >Vol:</text>
<text x="1064" y="731.5" font-size="12" fill="#0000E0" font-weight="bold" text-anchor="start" textLength="34" lengthAdjust="spacingAndGlyphs" >VHigh</text>
<text x="1114.5" y="731.5" font-size="12" fill="#0000E0" font-weight="normal" text-anchor="start" textLength="17.5" lengthAdjust="spacingAndGlyphs" >Spr:</text>
<text x="1136.8" y="731.5" font-size="12" fill="#0000E0" font-weight="bold" text-anchor="start" textLength="29" lengthAdjust="spacingAndGlyphs" >Wide</text>
<text x="1186.5" y="731.5" font-size="12" fill="#0000E0" font-weight="normal" text-anchor="start" textLength="28.5" lengthAdjust="spacingAndGlyphs" >Close:</text>
<text x="1219.4" y="731.5" font-size="12" fill="#0000E0" font-weight="bold" text-anchor="start" textLength="36.5" lengthAdjust="spacingAndGlyphs" >Middle</text>
<text x="1280.4" y="731.5" font-size="12" fill="#0000E0" font-weight="bold" text-anchor="start" textLength="74.5" lengthAdjust="spacingAndGlyphs" >Price: 1.3971</text>
<rect x="0" y="0" width="3" height="728" fill="#000" />
<rect x="0" y="0" width="1366" height="1" fill="#000" />
<rect x="1363" y="0" width="3" height="728" fill="#000" />
</svg>
</body></html>
